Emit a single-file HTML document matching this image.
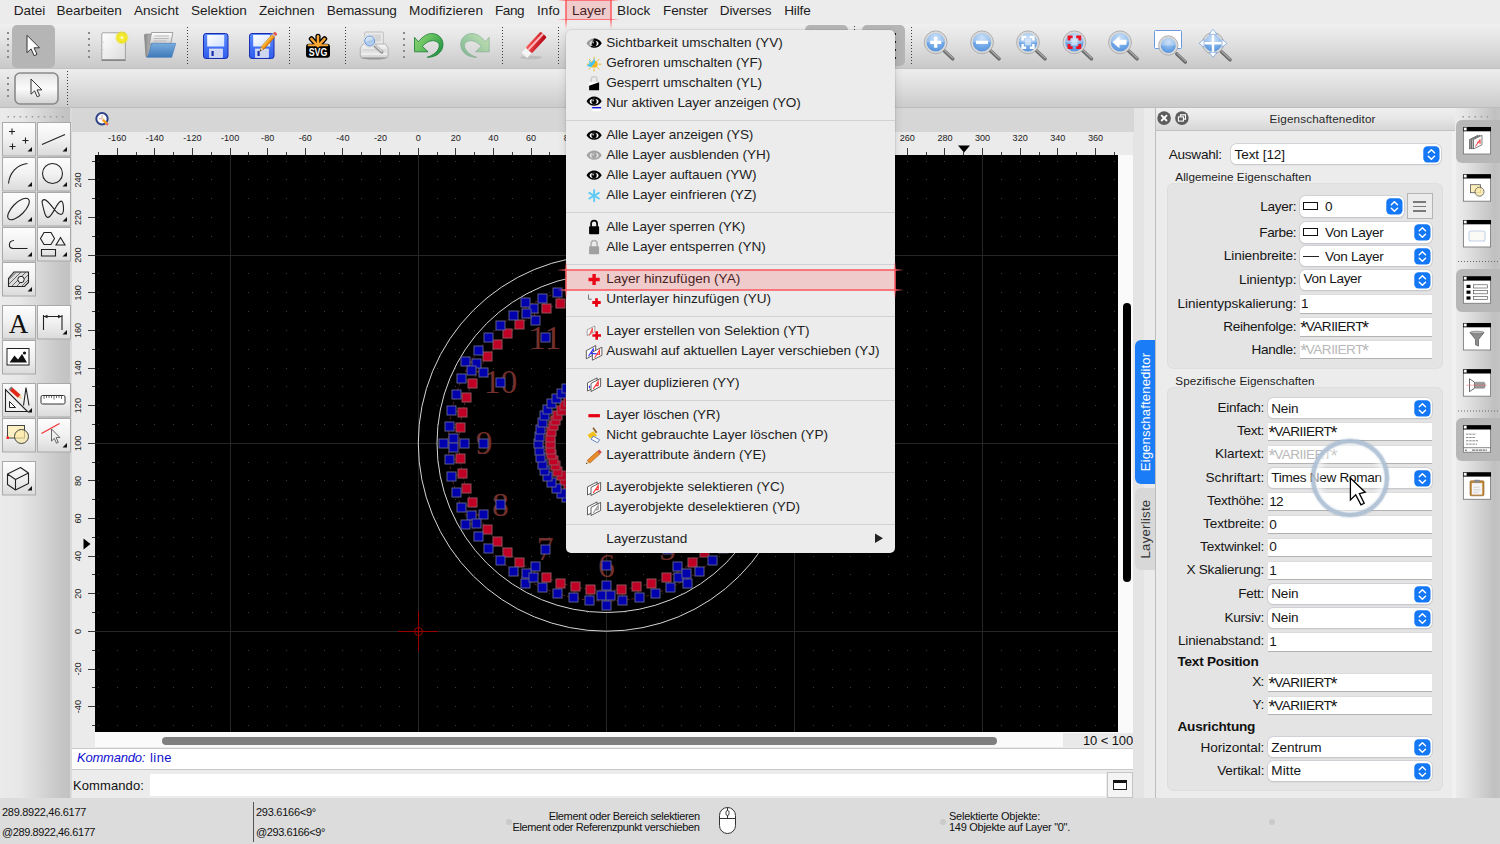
<!DOCTYPE html>
<html lang="de"><head><meta charset="utf-8"><title>QCAD</title>
<style>
html,body{margin:0;padding:0;}
body{width:1500px;height:844px;overflow:hidden;background:#ececec;position:relative;font-family:"Liberation Sans",sans-serif;}
.a{position:absolute;}
.t{position:absolute;white-space:pre;}
svg{position:absolute;overflow:visible;}

</style></head>
<body>
<!-- p10_base.py -->
<div class="a" style="left:0;top:0;width:1500px;height:24px;background:#ececec"></div>
<div class="a" style="left:0;top:24px;width:1500px;height:44px;background:linear-gradient(#efefef,#e6e6e6 30%,#c9c9c9)"></div>
<div class="a" style="left:0;top:68px;width:1500px;height:1px;background:#c2c2c2"></div>
<div class="a" style="left:0;top:69px;width:1500px;height:38px;background:linear-gradient(#ededed,#e4e4e4 30%,#cbcbcb)"></div>
<div class="a" style="left:0;top:107px;width:1500px;height:1px;background:#bdbdbd"></div>
<div class="a" style="left:0;top:108px;width:72px;height:690px;background:linear-gradient(90deg,#ebebeb,#e7e7e7 28%,#c5c5c5 86%,#c2c2c2 97.500%,#dcdcdc 98%)"></div>
<div class="a" style="left:72px;top:108px;width:1062px;height:24px;background:#d6d6d6"></div>
<div class="a" style="left:72px;top:132px;width:1062px;height:616px;background:#ebebeb"></div>
<div class="a" style="left:95px;top:155px;width:1023px;height:577px;background:#000"></div>
<div class="a" style="left:1118px;top:155px;width:15px;height:577px;background:#fafafa"></div>
<div class="a" style="left:1123.200px;top:303px;width:7.600px;height:278.500px;background:#000;border-radius:4px"></div>
<div class="a" style="left:95px;top:732px;width:1038px;height:16px;background:#fafafa"></div>
<div class="a" style="left:162px;top:737px;width:835px;height:8px;background:#7f7f7f;border-radius:4px"></div>
<div class="a" style="left:1063px;top:733px;width:70px;height:14px;background:#e9e9e9"></div>
<span class="t" style="left:1083.0px;top:733px;font:normal 400 13px/16px 'Liberation Sans',sans-serif;color:#111;letter-spacing:-0.12px;">10 &lt; 100</span>
<div class="a" style="left:1133px;top:108px;width:22px;height:690px;background:#e6e6e6"></div>
<div class="a" style="left:72px;top:747px;width:1061px;height:51px;background:#ececec"></div>
<div class="a" style="left:72px;top:748px;width:1061px;height:22px;background:#fff;border-top:1px solid #c8c8c8;border-bottom:1px solid #c8c8c8;box-sizing:border-box"></div>
<span class="t" style="left:77.0px;top:750px;font:italic 400 13px/16px 'Liberation Sans',sans-serif;color:#1010d0;letter-spacing:-0.23px;">Kommando:</span>
<span class="t" style="left:150.0px;top:750px;font:normal 400 13px/16px 'Liberation Sans',sans-serif;color:#1010d0;letter-spacing:0.44px;">line</span>
<span class="t" style="left:73.0px;top:778px;font:normal 400 13px/16px 'Liberation Sans',sans-serif;color:#111;letter-spacing:0.10px;">Kommando:</span>
<div class="a" style="left:150px;top:774px;width:956px;height:22px;background:#fff"></div>
<div class="a" style="left:1107px;top:772px;width:26px;height:26px;background:#f4f4f4;border:1px solid #c4c4c4;box-sizing:border-box"></div>
<div class="a" style="left:1113px;top:780px;width:14px;height:10px;background:#fff;border:1px solid #222;border-top:3px solid #111;box-sizing:border-box"></div>
<div class="a" style="left:0;top:798px;width:1500px;height:46px;background:#dcdcdc"></div>
<span class="t" style="left:2.0px;top:806px;font:normal 400 11px/13px 'Liberation Sans',sans-serif;color:#111;letter-spacing:-0.29px;">289.8922,46.6177</span>
<span class="t" style="left:2.0px;top:826px;font:normal 400 11px/13px 'Liberation Sans',sans-serif;color:#111;letter-spacing:-0.40px;">@289.8922,46.6177</span>
<div class="a" style="left:253px;top:802px;width:1px;height:40px;background:#555"></div>
<span class="t" style="left:256.0px;top:806px;font:normal 400 11px/13px 'Liberation Sans',sans-serif;color:#111;letter-spacing:-0.26px;">293.6166&lt;9°</span>
<span class="t" style="left:256.0px;top:826px;font:normal 400 11px/13px 'Liberation Sans',sans-serif;color:#111;letter-spacing:-0.42px;">@293.6166&lt;9°</span>
<span class="t" style="left:548.7px;top:810px;font:normal 400 11px/13px 'Liberation Sans',sans-serif;color:#111;letter-spacing:-0.34px;">Element oder Bereich selektieren</span>
<span class="t" style="left:512.6px;top:821px;font:normal 400 11px/13px 'Liberation Sans',sans-serif;color:#111;letter-spacing:-0.41px;">Element oder Referenzpunkt verschieben</span>
<span class="t" style="left:949.0px;top:810px;font:normal 400 11px/13px 'Liberation Sans',sans-serif;color:#111;letter-spacing:-0.25px;">Selektierte Objekte:</span>
<span class="t" style="left:949.0px;top:821px;font:normal 400 11px/13px 'Liberation Sans',sans-serif;color:#111;letter-spacing:-0.28px;">149 Objekte auf Layer "0".</span>
<div class="a" style="left:506px;top:818.800px;width:6px;height:6px;border-radius:3px;background:#cacaca"></div>
<div class="a" style="left:940px;top:818.800px;width:6px;height:6px;border-radius:3px;background:#cacaca"></div>
<div class="a" style="left:1269px;top:818.800px;width:6px;height:6px;border-radius:3px;background:#cacaca"></div>
<svg style="left:718px;top:805px" width="20" height="32" viewBox="0 0 20 32"><rect x="1.5" y="2.5" width="16" height="26" rx="8" fill="#fff" stroke="#333" stroke-width="1"/><path d="M1.5 13.5h16M9.5 2.5v4M9.5 10v3.5" stroke="#333" stroke-width="1" fill="none"/><rect x="8" y="5.5" width="3" height="5" rx="1.5" fill="#fff" stroke="#333" stroke-width="0.9"/></svg>
<!-- p20_toolbar.py -->
<span class="t" style="left:13.8px;top:3px;font:normal 400 13.6px/16px 'Liberation Sans',sans-serif;color:#1e1e1e;letter-spacing:-0.07px;">Datei</span>
<span class="t" style="left:56.6px;top:3px;font:normal 400 13.6px/16px 'Liberation Sans',sans-serif;color:#1e1e1e;letter-spacing:-0.07px;">Bearbeiten</span>
<span class="t" style="left:133.9px;top:3px;font:normal 400 13.6px/16px 'Liberation Sans',sans-serif;color:#1e1e1e;letter-spacing:0.05px;">Ansicht</span>
<span class="t" style="left:191.0px;top:3px;font:normal 400 13.6px/16px 'Liberation Sans',sans-serif;color:#1e1e1e;letter-spacing:-0.01px;">Selektion</span>
<span class="t" style="left:259.1px;top:3px;font:normal 400 13.6px/16px 'Liberation Sans',sans-serif;color:#1e1e1e;letter-spacing:-0.05px;">Zeichnen</span>
<span class="t" style="left:326.8px;top:3px;font:normal 400 13.6px/16px 'Liberation Sans',sans-serif;color:#1e1e1e;letter-spacing:-0.21px;">Bemassung</span>
<span class="t" style="left:409.0px;top:3px;font:normal 400 13.6px/16px 'Liberation Sans',sans-serif;color:#1e1e1e;letter-spacing:0.06px;">Modifizieren</span>
<span class="t" style="left:495.0px;top:3px;font:normal 400 13.6px/16px 'Liberation Sans',sans-serif;color:#1e1e1e;letter-spacing:-0.45px;">Fang</span>
<span class="t" style="left:537.0px;top:3px;font:normal 400 13.6px/16px 'Liberation Sans',sans-serif;color:#1e1e1e;letter-spacing:0.08px;">Info</span>
<span class="t" style="left:572.0px;top:3px;font:normal 400 13.6px/16px 'Liberation Sans',sans-serif;color:#1e1e1e;letter-spacing:-0.06px;">Layer</span>
<span class="t" style="left:617.1px;top:3px;font:normal 400 13.6px/16px 'Liberation Sans',sans-serif;color:#1e1e1e;letter-spacing:0.01px;">Block</span>
<span class="t" style="left:663.0px;top:3px;font:normal 400 13.6px/16px 'Liberation Sans',sans-serif;color:#1e1e1e;letter-spacing:-0.17px;">Fenster</span>
<span class="t" style="left:719.8px;top:3px;font:normal 400 13.6px/16px 'Liberation Sans',sans-serif;color:#1e1e1e;letter-spacing:-0.16px;">Diverses</span>
<span class="t" style="left:784.2px;top:3px;font:normal 400 13.6px/16px 'Liberation Sans',sans-serif;color:#1e1e1e;letter-spacing:-0.16px;">Hilfe</span>
<div class="a" style="left:12px;top:25px;width:43px;height:43px;border-radius:5px;background:#b5b5b5"></div>
<div class="a" style="left:7px;top:32px;width:2px;height:2px;background:#8a8a8a"></div><div class="a" style="left:7px;top:38px;width:2px;height:2px;background:#8a8a8a"></div><div class="a" style="left:7px;top:44px;width:2px;height:2px;background:#8a8a8a"></div><div class="a" style="left:7px;top:50px;width:2px;height:2px;background:#8a8a8a"></div><div class="a" style="left:7px;top:56px;width:2px;height:2px;background:#8a8a8a"></div>
<div class="a" style="left:88px;top:32px;width:2px;height:2px;background:#8a8a8a"></div><div class="a" style="left:88px;top:38px;width:2px;height:2px;background:#8a8a8a"></div><div class="a" style="left:88px;top:44px;width:2px;height:2px;background:#8a8a8a"></div><div class="a" style="left:88px;top:50px;width:2px;height:2px;background:#8a8a8a"></div><div class="a" style="left:88px;top:56px;width:2px;height:2px;background:#8a8a8a"></div>
<svg style="left:0;top:0" width="1500" height="110" viewBox="0 0 1500 110">
<path d="M27.0 35.3 L27.0 52.7 L31.1 48.9 L34.1 55.7 L37.0 54.4 L34.0 47.8 L39.5 47.8Z" fill="#fff" stroke="#333" stroke-width="1" stroke-linejoin="round"/>
<rect x="15" y="73" width="43" height="31" rx="5" fill="url(#gb2)" stroke="#8a8a8a" stroke-width="1.6"/>
<path d="M31.0 79.0 L31.0 94.2 L34.6 90.9 L37.2 96.8 L39.7 95.7 L37.1 89.9 L41.9 89.9Z" fill="#f6f6f6" stroke="#333" stroke-width="1" stroke-linejoin="round"/>
<defs><linearGradient id="gpaper" x1="0" y1="0" x2="1" y2="1"><stop offset="0" stop-color="#fff"/><stop offset="1" stop-color="#dcdcdc"/></linearGradient><radialGradient id="gyel"><stop offset="0" stop-color="#fff"/><stop offset="0.300" stop-color="#f4ec30"/><stop offset="0.700" stop-color="#efe520" stop-opacity="0.950"/><stop offset="1" stop-color="#e8dc20" stop-opacity="0"/></radialGradient><linearGradient id="gfold" x1="0" y1="0" x2="0" y2="1"><stop offset="0" stop-color="#7aaedf"/><stop offset="1" stop-color="#3f79b8"/></linearGradient><linearGradient id="gdisk" x1="0" y1="0" x2="0" y2="1"><stop offset="0" stop-color="#5c8cff"/><stop offset="1" stop-color="#2f5cec"/></linearGradient><linearGradient id="glabel" x1="0" y1="0" x2="1" y2="1"><stop offset="0" stop-color="#fff"/><stop offset="1" stop-color="#cfe0ff"/></linearGradient><radialGradient id="glens" cx="0.5" cy="0.3" r="0.8"><stop offset="0" stop-color="#b9d6f6"/><stop offset="0.55" stop-color="#6ea6e6"/><stop offset="1" stop-color="#4a86d2"/></radialGradient><linearGradient id="ggreen" x1="0" y1="0" x2="1" y2="0.600"><stop offset="0" stop-color="#93d873"/><stop offset="0.500" stop-color="#62bf5e"/><stop offset="1" stop-color="#2a9a45"/></linearGradient><linearGradient id="ggreen2" x1="0" y1="0" x2="1" y2="0.600"><stop offset="0" stop-color="#a3e083"/><stop offset="1" stop-color="#3aa055"/></linearGradient><linearGradient id="gred" x1="0" y1="0" x2="1" y2="1"><stop offset="0" stop-color="#ff5a5a"/><stop offset="1" stop-color="#b00010"/></linearGradient><linearGradient id="gfback" x1="0" y1="0" x2="1" y2="0"><stop offset="0" stop-color="#8c8c8c"/><stop offset="1" stop-color="#c4c4c4"/></linearGradient><linearGradient id="gpaper2" x1="0" y1="0" x2="0" y2="1"><stop offset="0" stop-color="#fff"/><stop offset="1" stop-color="#cfcfcf"/></linearGradient><linearGradient id="gpen" x1="0" y1="0" x2="0" y2="1"><stop offset="0" stop-color="#ffd24a"/><stop offset="0.500" stop-color="#f7a11e"/><stop offset="1" stop-color="#e07a10"/></linearGradient><linearGradient id="gprn" x1="0" y1="0" x2="0" y2="1"><stop offset="0" stop-color="#f6f6f6"/><stop offset="1" stop-color="#d4d4d4"/></linearGradient><linearGradient id="glens2" x1="0" y1="0" x2="0.400" y2="1"><stop offset="0" stop-color="#e4eefa"/><stop offset="0.550" stop-color="#c6daf0"/><stop offset="0.600" stop-color="#a8c6ea"/><stop offset="1" stop-color="#b8d2ee"/></linearGradient><linearGradient id="gb2" x1="0" y1="0" x2="0" y2="1"><stop offset="0" stop-color="#e4e4e4"/><stop offset="0.5" stop-color="#fbfbfb"/><stop offset="1" stop-color="#d2d2d2"/></linearGradient></defs>
<rect x="101.800" y="32.800" width="23.600" height="27" rx="1.200" fill="url(#gpaper)" stroke="#9c9c9c" stroke-width="0.900"/><path d="M101.500 60.200h24.200" stroke="#7c7c7c" stroke-width="1.300"/><path d="M103 42.300h1.200M103 49.600h1.200" stroke="#c8c8c8" stroke-width="0.800"/>
<circle cx="121.900" cy="37.700" r="7" fill="url(#gyel)"/>
<path d="M144.500 34.800l1-0.600h6l1.500 2v20.300h-7z" fill="url(#gfback)" stroke="#6e6e6e" stroke-width="0.600"/>
<path d="M151.600 32.500h21.200l-2 11.500h-21.500z" fill="url(#gpaper2)" stroke="#8e8e8e" stroke-width="0.800"/><path d="M154.500 36h14.500M154 38.500h14.500M153.500 41h13" stroke="#b8b8b8" stroke-width="1.100"/>
<path d="M151.700 43.200l24 0.200-4 13.900-25 0 2-3z" fill="url(#gfold)" stroke="#4a7fc0" stroke-width="0.700" stroke-linejoin="round"/>
<rect x="203.5" y="33.5" width="24.5" height="25" rx="2.5" fill="url(#gdisk)" stroke="#1b2fae" stroke-width="1"/><rect x="207.2" y="35" width="17" height="11.5" fill="url(#glabel)"/><rect x="209.5" y="49" width="13" height="8.5" fill="#cdd6ee" stroke="#eef" stroke-width="0.6"/><rect x="211.5" y="51" width="2.2" height="5" fill="#1b2fae"/>
<rect x="249.5" y="33.5" width="24.5" height="25" rx="2.5" fill="url(#gdisk)" stroke="#1b2fae" stroke-width="1"/><rect x="253.2" y="35" width="17" height="11.5" fill="url(#glabel)"/><rect x="255.5" y="49" width="13" height="8.5" fill="#cdd6ee" stroke="#eef" stroke-width="0.6"/><rect x="257.5" y="51" width="2.2" height="5" fill="#1b2fae"/>
<g transform="translate(259.800 51.200) rotate(-48.500)"><path d="M0 0L4.200 -1.900V1.900z" fill="#f0d2a0" stroke="#a8752a" stroke-width="0.400"/><path d="M0 0l1.700-0.800v1.600z" fill="#222"/><rect x="4.200" y="-1.900" width="16.500" height="3.800" fill="url(#gpen)" stroke="#b8600a" stroke-width="0.500"/><rect x="20.700" y="-1.900" width="1.300" height="3.800" fill="#c9c9c9"/><rect x="22" y="-1.900" width="2.500" height="3.800" rx="0.800" fill="#e0574f"/></g>
<path d="M318 46L318 36.3" stroke="#000" stroke-width="5.200" stroke-linecap="round"/>
<path d="M318 46L311.4 38.8" stroke="#000" stroke-width="5.200" stroke-linecap="round"/>
<path d="M318 46L324.6 38.8" stroke="#000" stroke-width="5.200" stroke-linecap="round"/>
<rect x="306" y="43.800" width="24" height="14" rx="3" fill="#000"/>
<path d="M318 46L318 36.3" stroke="#fba834" stroke-width="2.500" stroke-linecap="round"/>
<path d="M318 46L311.4 38.8" stroke="#fba834" stroke-width="2.500" stroke-linecap="round"/>
<path d="M318 46L324.6 38.8" stroke="#fba834" stroke-width="2.500" stroke-linecap="round"/>
<rect x="307.600" y="44.300" width="20.800" height="2" rx="1" fill="#fba834"/>
<text x="318" y="56.400" font-family="Liberation Sans, sans-serif" font-weight="700" font-size="11.600" fill="#fff" text-anchor="middle" textLength="18.600" lengthAdjust="spacingAndGlyphs">SVG</text>
<ellipse cx="374" cy="57.800" rx="13" ry="1.800" fill="#868686" opacity="0.800"/>
<rect x="364.700" y="32" width="18.600" height="14" rx="1" fill="#eaeaea" stroke="#b4b4b4" stroke-width="0.800"/><rect x="372" y="34.500" width="9" height="7" fill="#d6d6d6"/>
<path d="M363 44h22.500l2.500 4v7.700q0 2-2 2h-23.700q-2 0-2-2v-7.700z" fill="url(#gprn)" stroke="#a6a6a6" stroke-width="0.800"/><path d="M362.500 50h23.500" stroke="#c9c9c9" stroke-width="1"/><path d="M361 54h26.500" stroke="#fff" stroke-width="1.200" opacity="0.800"/>
<path d="M374.800 45.800l7 6.300" stroke="#9a9a9a" stroke-width="3.400" stroke-linecap="round"/><path d="M375.200 45.300l6.600 5.900" stroke="#e0e0e0" stroke-width="1.200" stroke-linecap="round"/>
<circle cx="369.700" cy="41" r="6.300" fill="#f2f2f2" stroke="#cfcfcf" stroke-width="0.600"/><circle cx="369.700" cy="41" r="5" fill="url(#glens2)" stroke="#5a8fd2" stroke-width="0.900"/>
<path d="M414.5 37.3L418.3 41.8C421 38.500 426 33.500 431.600 33.500C438 33.500 443 38 443 44.500C443 52 436 57.500 427.200 57.300C433 55.500 439.200 51 439.200 45.600C439.200 42.500 436 40.700 432.500 40.700C428.500 40.700 425 43.500 422.400 46.400L428.100 51.800L414.500 51.800Z" fill="url(#ggreen)" stroke="#1a7a35" stroke-width="0.800" stroke-linejoin="round"/>
<g transform="translate(903.700 0) scale(-1 1)" opacity="0.500"><path d="M414.5 37.3L418.3 41.8C421 38.500 426 33.500 431.600 33.500C438 33.500 443 38 443 44.500C443 52 436 57.500 427.200 57.300C433 55.500 439.200 51 439.200 45.600C439.200 42.500 436 40.700 432.500 40.700C428.500 40.700 425 43.500 422.400 46.400L428.100 51.800L414.500 51.800Z" fill="url(#ggreen2)" stroke="#3a8a55" stroke-width="0.800" stroke-linejoin="round"/></g>
<ellipse cx="531" cy="57.500" rx="11" ry="1.800" fill="#bdbdbd"/>
<g transform="translate(524 55.500) rotate(-47)"><rect x="0" y="-4.200" width="7" height="8.400" fill="#f5f5f5" stroke="#c9c9c9" stroke-width="0.6"/><rect x="7" y="-4.200" width="22" height="8.400" rx="1.500" fill="url(#gred)"/><rect x="7" y="-1.800" width="22" height="2" fill="#ffd0d0" opacity="0.85"/></g>
<path d="M944.2 50.8l8.500 8" stroke="#6b6b6b" stroke-width="3.600" stroke-linecap="round"/><path d="M944.5 50.2l8.500 8" stroke="#a9a9a9" stroke-width="1.200" stroke-linecap="round"/><circle cx="935.7" cy="42.3" r="10.3" fill="url(#glens)" stroke="#d9d9d9" stroke-width="2.200"/><circle cx="935.7" cy="42.3" r="11.4" fill="none" stroke="#9b9b9b" stroke-width="0.700"/><path d="M926.4 42.3a9.3 9.3 0 0 1 18.6 0z" fill="#fff" opacity="0.28"/>
<path d="M930.2 42.3h11M935.7 36.8v11" stroke="#fff" stroke-width="3.200"/>
<path d="M990.5 50.8l8.500 8" stroke="#6b6b6b" stroke-width="3.600" stroke-linecap="round"/><path d="M990.8 50.2l8.500 8" stroke="#a9a9a9" stroke-width="1.200" stroke-linecap="round"/><circle cx="982" cy="42.3" r="10.3" fill="url(#glens)" stroke="#d9d9d9" stroke-width="2.200"/><circle cx="982" cy="42.3" r="11.4" fill="none" stroke="#9b9b9b" stroke-width="0.700"/><path d="M972.7 42.3a9.3 9.3 0 0 1 18.6 0z" fill="#fff" opacity="0.28"/>
<path d="M976 42.3h12" stroke="#fff" stroke-width="3.200"/>
<path d="M1036.5 50.8l8.500 8" stroke="#6b6b6b" stroke-width="3.600" stroke-linecap="round"/><path d="M1036.8 50.2l8.500 8" stroke="#a9a9a9" stroke-width="1.200" stroke-linecap="round"/><circle cx="1028" cy="42.3" r="10.3" fill="url(#glens)" stroke="#d9d9d9" stroke-width="2.200"/><circle cx="1028" cy="42.3" r="11.4" fill="none" stroke="#9b9b9b" stroke-width="0.700"/><path d="M1018.7 42.3a9.3 9.3 0 0 1 18.6 0z" fill="#fff" opacity="0.28"/>
<path d="M1022.6 40.5v-3.6h3.6M1022.6 44.1v3.6h3.6M1033.4 40.5v-3.6h-3.6M1033.4 44.1v3.6h-3.6" fill="none" stroke="#fff" stroke-width="2.4"/>
<rect x="1025" y="39.3" width="6" height="6" fill="#dbe9fa" opacity="0.7"/>
<path d="M1082.9 50.8l8.500 8" stroke="#6b6b6b" stroke-width="3.600" stroke-linecap="round"/><path d="M1083.2 50.2l8.500 8" stroke="#a9a9a9" stroke-width="1.200" stroke-linecap="round"/><circle cx="1074.4" cy="42.3" r="10.3" fill="url(#glens)" stroke="#d9d9d9" stroke-width="2.200"/><circle cx="1074.4" cy="42.3" r="11.4" fill="none" stroke="#9b9b9b" stroke-width="0.700"/><path d="M1065.1 42.3a9.3 9.3 0 0 1 18.6 0z" fill="#fff" opacity="0.28"/>
<path d="M1069 40.5v-3.6h3.6M1069 44.1v3.6h3.6M1079.8 40.5v-3.6h-3.6M1079.8 44.1v3.6h-3.6" fill="none" stroke="#ee1020" stroke-width="2.8"/>
<rect x="1071.4" y="39.3" width="6" height="6" fill="#dbe9fa" opacity="0.7"/>
<path d="M1128.5 50.8l8.500 8" stroke="#6b6b6b" stroke-width="3.600" stroke-linecap="round"/><path d="M1128.8 50.2l8.500 8" stroke="#a9a9a9" stroke-width="1.200" stroke-linecap="round"/><circle cx="1120" cy="42.3" r="10.3" fill="url(#glens)" stroke="#d9d9d9" stroke-width="2.200"/><circle cx="1120" cy="42.3" r="11.4" fill="none" stroke="#9b9b9b" stroke-width="0.700"/><path d="M1110.7 42.3a9.3 9.3 0 0 1 18.6 0z" fill="#fff" opacity="0.28"/>
<path d="M1112.5 42.3l7-6v3.500h7v5h-7v3.500z" fill="#fff"/>
<rect x="1154.500" y="30.500" width="27" height="18" rx="1" fill="#fff" stroke="#6a9ae0" stroke-width="1"/>
<path d="M1176.8 54l8.500 8" stroke="#6b6b6b" stroke-width="3.600" stroke-linecap="round"/><path d="M1177.1 53.4l8.500 8" stroke="#a9a9a9" stroke-width="1.200" stroke-linecap="round"/><circle cx="1168.3" cy="45.5" r="8.6" fill="url(#glens)" stroke="#d9d9d9" stroke-width="2.200"/><circle cx="1168.3" cy="45.5" r="9.7" fill="none" stroke="#9b9b9b" stroke-width="0.700"/><path d="M1160.7 45.5a7.6 7.6 0 0 1 15.2 0z" fill="#fff" opacity="0.28"/>
<path d="M1221.5 51.8l8.500 8" stroke="#6b6b6b" stroke-width="3.600" stroke-linecap="round"/><path d="M1221.8 51.2l8.500 8" stroke="#a9a9a9" stroke-width="1.200" stroke-linecap="round"/><circle cx="1213" cy="43.3" r="9.6" fill="url(#glens)" stroke="#d9d9d9" stroke-width="2.200"/><circle cx="1213" cy="43.3" r="10.7" fill="none" stroke="#9b9b9b" stroke-width="0.700"/><path d="M1204.4 43.3a8.6 8.6 0 0 1 17.2 0z" fill="#fff" opacity="0.28"/>
<path d="M1213 30.8v25M1200.5 43.3h25" stroke="#fff" stroke-width="2.400"/>
<path d="M1213 29.3l4 5h-8zM1213 57.3l4-5h-8zM1199 43.3l5-4v8zM1227 43.3l-5-4v8z" fill="#fff" stroke="#5b8fd6" stroke-width="0.600"/>
</svg>
<div class="a" style="left:186.9px;top:27px;width:1.200px;height:39px;background:repeating-linear-gradient(180deg,#3c3c3c 0,#3c3c3c 1.100px,transparent 1.100px,transparent 3px)"></div>
<div class="a" style="left:288.9px;top:27px;width:1.200px;height:39px;background:repeating-linear-gradient(180deg,#3c3c3c 0,#3c3c3c 1.100px,transparent 1.100px,transparent 3px)"></div>
<div class="a" style="left:344.9px;top:27px;width:1.200px;height:39px;background:repeating-linear-gradient(180deg,#3c3c3c 0,#3c3c3c 1.100px,transparent 1.100px,transparent 3px)"></div>
<div class="a" style="left:501.9px;top:27px;width:1.200px;height:39px;background:repeating-linear-gradient(180deg,#3c3c3c 0,#3c3c3c 1.100px,transparent 1.100px,transparent 3px)"></div>
<div class="a" style="left:558.2px;top:27px;width:1.200px;height:39px;background:repeating-linear-gradient(180deg,#3c3c3c 0,#3c3c3c 1.100px,transparent 1.100px,transparent 3px)"></div>
<div class="a" style="left:910.9px;top:27px;width:1.200px;height:39px;background:repeating-linear-gradient(180deg,#3c3c3c 0,#3c3c3c 1.100px,transparent 1.100px,transparent 3px)"></div>
<div class="a" style="left:66.9px;top:71px;width:1.200px;height:34px;background:repeating-linear-gradient(180deg,#3c3c3c 0,#3c3c3c 1.100px,transparent 1.100px,transparent 3px)"></div>
<div class="a" style="left:403px;top:32px;width:2px;height:2px;background:#8a8a8a"></div><div class="a" style="left:403px;top:38px;width:2px;height:2px;background:#8a8a8a"></div><div class="a" style="left:403px;top:44px;width:2px;height:2px;background:#8a8a8a"></div><div class="a" style="left:403px;top:50px;width:2px;height:2px;background:#8a8a8a"></div><div class="a" style="left:403px;top:56px;width:2px;height:2px;background:#8a8a8a"></div>
<div class="a" style="left:7px;top:77px;width:2px;height:2px;background:#8a8a8a"></div><div class="a" style="left:7px;top:83px;width:2px;height:2px;background:#8a8a8a"></div><div class="a" style="left:7px;top:89px;width:2px;height:2px;background:#8a8a8a"></div><div class="a" style="left:7px;top:95px;width:2px;height:2px;background:#8a8a8a"></div>
<div class="a" style="left:805px;top:25px;width:43px;height:41px;border-radius:5px;background:#b5b5b5"></div>
<div class="a" style="left:862px;top:25px;width:43px;height:41px;border-radius:5px;background:#b5b5b5"></div>
<div class="a" style="left:894.4px;top:33px;width:2px;height:2px;background:#222"></div><div class="a" style="left:894.4px;top:41px;width:2px;height:2px;background:#222"></div><div class="a" style="left:894.4px;top:49px;width:2px;height:2px;background:#222"></div><div class="a" style="left:894.4px;top:57px;width:2px;height:2px;background:#222"></div>
<div class="a" style="left:853.9px;top:26px;width:1.200px;height:40px;background:repeating-linear-gradient(180deg,#3c3c3c 0,#3c3c3c 1.100px,transparent 1.100px,transparent 3px)"></div>
<!-- p30_left.py -->
<svg style="left:0;top:108px" width="72" height="400" viewBox="0 108 72 400">
<defs><linearGradient id="gbtn" x1="0" y1="0" x2="0" y2="1"><stop offset="0" stop-color="#fdfdfd"/><stop offset="0.5" stop-color="#f1f1f1"/><stop offset="1" stop-color="#dadada"/></linearGradient></defs>
<rect x="7.5" y="116" width="1.500" height="1.500" fill="#999"/>
<rect x="13.55" y="116" width="1.500" height="1.500" fill="#999"/>
<rect x="19.6" y="116" width="1.500" height="1.500" fill="#999"/>
<rect x="25.65" y="116" width="1.500" height="1.500" fill="#999"/>
<rect x="31.7" y="116" width="1.500" height="1.500" fill="#999"/>
<rect x="37.75" y="116" width="1.500" height="1.500" fill="#999"/>
<rect x="43.8" y="116" width="1.500" height="1.500" fill="#999"/>
<rect x="49.85" y="116" width="1.500" height="1.500" fill="#999"/>
<rect x="55.9" y="116" width="1.500" height="1.500" fill="#999"/>
<rect x="61.95" y="116" width="1.500" height="1.500" fill="#999"/>
<rect x="2.5" y="122.5" width="33" height="33.500" fill="url(#gbtn)" stroke="#a9a9a9" stroke-width="1"/><path d="M32 151.5v-4.500l-4.500 4.500z" fill="#111"/>
<path d="M9 131.500h6M12 128.500v6M22.500 140.500h6M25.500 137.500v6M9.500 146.500h6M12.500 143.500v6" fill="none" stroke="#222" stroke-width="1.100"/>
<rect x="37.5" y="122.5" width="33" height="33.500" fill="url(#gbtn)" stroke="#a9a9a9" stroke-width="1"/><path d="M67 151.5v-4.500l-4.500 4.500z" fill="#111"/>
<path d="M42 144.500L65 134.500" fill="none" stroke="#222" stroke-width="1.100"/>
<rect x="2.5" y="157.5" width="33" height="33.500" fill="url(#gbtn)" stroke="#a9a9a9" stroke-width="1"/><path d="M32 186.5v-4.500l-4.500 4.500z" fill="#111"/>
<path d="M8.500 183.500C9.500 173 17 164.500 27.500 163.500" fill="none" stroke="#222" stroke-width="1.100"/>
<rect x="37.5" y="157.5" width="33" height="33.500" fill="url(#gbtn)" stroke="#a9a9a9" stroke-width="1"/><path d="M67 186.5v-4.500l-4.500 4.500z" fill="#111"/>
<circle cx="52.500" cy="173.500" r="10" fill="none" stroke="#222" stroke-width="1.100"/>
<rect x="2.5" y="192.5" width="33" height="33.500" fill="url(#gbtn)" stroke="#a9a9a9" stroke-width="1"/><path d="M32 221.5v-4.500l-4.500 4.500z" fill="#111"/>
<ellipse cx="18.500" cy="209" rx="14" ry="6" transform="rotate(-45 18.500 209)" fill="none" stroke="#222" stroke-width="1.100"/>
<rect x="37.5" y="192.5" width="33" height="33.500" fill="url(#gbtn)" stroke="#a9a9a9" stroke-width="1"/><path d="M67 221.5v-4.500l-4.500 4.500z" fill="#111"/>
<path d="M42 201.500C44 196 50 204 54 209C58 214.500 64 218 63.500 208C63 198 60 200 56 207C52 214 48 222 45 214C43.500 209 42.500 205 42 201.500z" fill="none" stroke="#222" stroke-width="1.100"/>
<rect x="2.5" y="227.5" width="33" height="33.500" fill="url(#gbtn)" stroke="#a9a9a9" stroke-width="1"/><path d="M32 256.5v-4.500l-4.500 4.500z" fill="#111"/>
<path d="M14 240.500C8 241 8 248 13 248.500H27.500" fill="none" stroke="#222" stroke-width="1.100"/>
<rect x="37.5" y="227.5" width="33" height="33.500" fill="url(#gbtn)" stroke="#a9a9a9" stroke-width="1"/><path d="M67 256.5v-4.500l-4.500 4.500z" fill="#111"/>
<path d="M44 232.500h7l3.500 6-3.500 6h-7l-3.500-6zM60.500 237.500l4.500 7.500h-9zM41.500 249.500h14v6.500h-14z" fill="none" stroke="#222" stroke-width="1.100"/>
<rect x="2.5" y="262.5" width="33" height="33.500" fill="url(#gbtn)" stroke="#a9a9a9" stroke-width="1"/><path d="M32 291.5v-4.500l-4.500 4.500z" fill="#111"/>
<path d="M8.500 286.500v-8l5.500-6.500h14.500v10.500l-4 4z" fill="#ddd" stroke="#222" stroke-width="1.100"/><path d="M9 284l12-12M9 279.500l7-7M12 286l14-14M17 286l11.500-11.500M22 286l6.500-6.500" stroke="#333" stroke-width="0.700"/><circle cx="21" cy="279.500" r="3.200" fill="#eee" stroke="#222" stroke-width="1"/>
<rect x="2.5" y="305.5" width="33" height="33.500" fill="url(#gbtn)" stroke="#a9a9a9" stroke-width="1"/>
<text x="18.500" y="332.500" font-family="Liberation Serif, serif" font-size="27" fill="#111" text-anchor="middle">A</text>
<rect x="37.5" y="305.5" width="33" height="33.500" fill="url(#gbtn)" stroke="#a9a9a9" stroke-width="1"/><path d="M67 334.5v-4.500l-4.500 4.500z" fill="#111"/>
<path d="M43.500 315v15M62 315v15M43.500 316.500h18.500" fill="none" stroke="#222" stroke-width="1.100"/><path d="M43.500 316.500l4-1.800v3.600zM62 316.500l-4-1.800v3.600z" fill="#222"/>
<rect x="2.5" y="340.5" width="33" height="33.500" fill="url(#gbtn)" stroke="#a9a9a9" stroke-width="1"/>
<rect x="7" y="348.500" width="22" height="16.500" fill="#fff" stroke="#222" stroke-width="1"/><path d="M9.500 362.500l5-7 3.500 4 4-5.500 5 8.500z" fill="#111"/><circle cx="24.500" cy="353" r="1.600" fill="#111"/>
<rect x="2.5" y="383.5" width="33" height="33.500" fill="url(#gbtn)" stroke="#a9a9a9" stroke-width="1"/><path d="M32 412.5v-4.500l-4.500 4.500z" fill="#111"/>
<path d="M5.500 389.500v22h22z" fill="#f2f2f2" stroke="#222" stroke-width="1.100"/><path d="M9.500 401.500v6h6z" fill="#fff" stroke="#222" stroke-width="1"/><g transform="translate(11 389) rotate(42)"><rect x="0" y="-2" width="11" height="4" fill="#e02818"/><path d="M11 -2l4 2-4 2z" fill="#f2c98a"/><rect x="-1.500" y="-2" width="2" height="4" fill="#777"/></g><path d="M26 387.500l-2.500 18M26 387.500l3 18M25 391.500h2" stroke="#222" stroke-width="1.100" fill="none"/>
<rect x="37.5" y="383.5" width="33" height="33.500" fill="url(#gbtn)" stroke="#a9a9a9" stroke-width="1"/>
<rect x="41" y="395.500" width="24" height="8.500" rx="1.500" fill="#fff" stroke="#333" stroke-width="1"/><path d="M44 396v3M46.500 396v2M49 396v2M51.500 396v2M54 396v3.500M56.500 396v2M59 396v2M61.500 396v3" stroke="#333" stroke-width="0.700"/>
<rect x="2.5" y="418.5" width="33" height="33.500" fill="url(#gbtn)" stroke="#a9a9a9" stroke-width="1"/>
<rect x="7.500" y="425.500" width="17" height="12.500" fill="#fdf1c4" stroke="#444" stroke-width="1"/><circle cx="21.500" cy="436.500" r="7" fill="#fbe9a6" fill-opacity="0.7" stroke="#444" stroke-width="1"/><rect x="6.500" y="436.500" width="2.500" height="2.500" fill="#f22"/>
<rect x="37.5" y="418.5" width="33" height="33.500" fill="url(#gbtn)" stroke="#a9a9a9" stroke-width="1"/><path d="M67 447.5v-4.500l-4.500 4.500z" fill="#111"/>
<path d="M41.500 433.500L59.500 423.500" stroke="#f03030" stroke-width="1.200"/><path d="M51.500 429v12l2.800-2.600 2.200 4.800 1.800-0.800-2.200-4.700 3.800-0.200z" fill="#eee" stroke="#555" stroke-width="0.900"/>
<rect x="2.5" y="461.5" width="33" height="33.500" fill="url(#gbtn)" stroke="#a9a9a9" stroke-width="1"/><path d="M32 490.5v-4.500l-4.500 4.500z" fill="#111"/>
<path d="M7.500 474l13-6.500 8 5.500v10.500l-13 6.500-8-5.500zM7.500 474l8 5.500 13-6.500M15.500 479.500v10.500" fill="none" stroke="#222" stroke-width="1.100" stroke-linejoin="round"/>
</svg>
<!-- p40_canvas.py -->
<svg style="left:72px;top:132px" width="1062" height="616" viewBox="72 132 1062 616">
<path d="M98.5 152V155M117.5 148V155M136.5 152V155M154.5 148V155M173.5 152V155M192.5 148V155M211.5 152V155M230.5 148V155M248.5 152V155M267.5 148V155M286.5 152V155M305.5 148V155M324.5 152V155M342.5 148V155M361.5 152V155M380.5 148V155M399.5 152V155M418.5 148V155M437.5 152V155M455.5 148V155M474.5 152V155M493.5 148V155M512.5 152V155M531.5 148V155M549.5 152V155M568.5 148V155M587.5 152V155M606.5 148V155M625.5 152V155M643.5 148V155M662.5 152V155M681.5 148V155M700.5 152V155M719.5 148V155M738.5 152V155M756.5 148V155M775.5 152V155M794.5 148V155M813.5 152V155M832.5 148V155M850.5 152V155M869.5 148V155M888.5 152V155M907.5 148V155M926.5 152V155M944.5 148V155M963.5 152V155M982.5 148V155M1001.5 152V155M1020.5 148V155M1039.5 152V155M1057.5 148V155M1076.5 152V155M1095.5 148V155M1114.5 152V155M92 725.5H95M88 706.5H95M92 687.5H95M88 669.5H95M92 650.5H95M88 631.5H95M92 612.5H95M88 593.5H95M92 574.5H95M88 556.5H95M92 537.5H95M88 518.5H95M92 499.5H95M88 480.5H95M92 462.5H95M88 443.5H95M92 424.5H95M88 405.5H95M92 386.5H95M88 368.5H95M92 349.5H95M88 330.5H95M92 311.5H95M88 292.5H95M92 273.5H95M88 255.5H95M92 236.5H95M88 217.5H95M92 198.5H95M88 179.5H95M92 161.5H95" stroke="#3a3a3a" stroke-width="1" fill="none"/>
<path d="M958 145.500h12l-6 7z" fill="#000"/>
<path d="M83.500 538.500v11l7-5.500z" fill="#000"/>
<g font-family="Liberation Sans, sans-serif" font-size="9.100" fill="#1c1c1c" text-anchor="middle">
<text x="117.2" y="140.600">-160</text>
<text x="154.8" y="140.600">-140</text>
<text x="192.4" y="140.600">-120</text>
<text x="230.1" y="140.600">-100</text>
<text x="267.7" y="140.600">-80</text>
<text x="305.3" y="140.600">-60</text>
<text x="342.9" y="140.600">-40</text>
<text x="380.6" y="140.600">-20</text>
<text x="418.2" y="140.600">0</text>
<text x="455.8" y="140.600">20</text>
<text x="493.4" y="140.600">40</text>
<text x="531.1" y="140.600">60</text>
<text x="568.7" y="140.600">80</text>
<text x="606.3" y="140.600">100</text>
<text x="644.0" y="140.600">120</text>
<text x="681.6" y="140.600">140</text>
<text x="719.2" y="140.600">160</text>
<text x="756.8" y="140.600">180</text>
<text x="794.5" y="140.600">200</text>
<text x="832.1" y="140.600">220</text>
<text x="869.7" y="140.600">240</text>
<text x="907.3" y="140.600">260</text>
<text x="945.0" y="140.600">280</text>
<text x="982.6" y="140.600">300</text>
<text x="1020.2" y="140.600">320</text>
<text x="1057.8" y="140.600">340</text>
<text x="1095.5" y="140.600">360</text>
<text transform="translate(80.600 706.6) rotate(-90)">-40</text>
<text transform="translate(80.600 669.0) rotate(-90)">-20</text>
<text transform="translate(80.600 631.4) rotate(-90)">0</text>
<text transform="translate(80.600 593.8) rotate(-90)">20</text>
<text transform="translate(80.600 556.1) rotate(-90)">40</text>
<text transform="translate(80.600 518.5) rotate(-90)">60</text>
<text transform="translate(80.600 480.9) rotate(-90)">80</text>
<text transform="translate(80.600 443.3) rotate(-90)">100</text>
<text transform="translate(80.600 405.6) rotate(-90)">120</text>
<text transform="translate(80.600 368.0) rotate(-90)">140</text>
<text transform="translate(80.600 330.4) rotate(-90)">160</text>
<text transform="translate(80.600 292.8) rotate(-90)">180</text>
<text transform="translate(80.600 255.1) rotate(-90)">200</text>
<text transform="translate(80.600 217.5) rotate(-90)">220</text>
<text transform="translate(80.600 179.9) rotate(-90)">240</text>
</g></svg>
<svg style="left:94px;top:110px" width="18" height="18" viewBox="94 110 18 18"><circle cx="102" cy="118.800" r="5.700" fill="#fff" stroke="#2f4488" stroke-width="2"/><path d="M102 115v3.800h-3" stroke="#c88" stroke-width="0.800" fill="none"/><path d="M102.500 119.300l4.800 4.800" stroke="#f0a020" stroke-width="2.400" stroke-linecap="butt"/><path d="M106.600 123.400l1.400 1.400" stroke="#e66" stroke-width="2.400"/><path d="M101.800 118.600l2.200 0.400-1.800 1.800z" fill="#f6d9a0"/></svg>
<svg style="left:95px;top:155px" width="1023" height="577" viewBox="95 155 1023 577">
<path d="M98 725h1M98 706h1M98 687h1M98 669h1M98 650h1M98 631h1M98 612h1M98 593h1M98 574h1M98 556h1M98 537h1M98 518h1M98 499h1M98 480h1M98 462h1M98 443h1M98 424h1M98 405h1M98 386h1M98 368h1M98 349h1M98 330h1M98 311h1M98 292h1M98 273h1M98 255h1M98 236h1M98 217h1M98 198h1M98 179h1M98 161h1M117 725h1M117 706h1M117 687h1M117 669h1M117 650h1M117 631h1M117 612h1M117 593h1M117 574h1M117 556h1M117 537h1M117 518h1M117 499h1M117 480h1M117 462h1M117 443h1M117 424h1M117 405h1M117 386h1M117 368h1M117 349h1M117 330h1M117 311h1M117 292h1M117 273h1M117 255h1M117 236h1M117 217h1M117 198h1M117 179h1M117 161h1M136 725h1M136 706h1M136 687h1M136 669h1M136 650h1M136 631h1M136 612h1M136 593h1M136 574h1M136 556h1M136 537h1M136 518h1M136 499h1M136 480h1M136 462h1M136 443h1M136 424h1M136 405h1M136 386h1M136 368h1M136 349h1M136 330h1M136 311h1M136 292h1M136 273h1M136 255h1M136 236h1M136 217h1M136 198h1M136 179h1M136 161h1M154 725h1M154 706h1M154 687h1M154 669h1M154 650h1M154 631h1M154 612h1M154 593h1M154 574h1M154 556h1M154 537h1M154 518h1M154 499h1M154 480h1M154 462h1M154 443h1M154 424h1M154 405h1M154 386h1M154 368h1M154 349h1M154 330h1M154 311h1M154 292h1M154 273h1M154 255h1M154 236h1M154 217h1M154 198h1M154 179h1M154 161h1M173 725h1M173 706h1M173 687h1M173 669h1M173 650h1M173 631h1M173 612h1M173 593h1M173 574h1M173 556h1M173 537h1M173 518h1M173 499h1M173 480h1M173 462h1M173 443h1M173 424h1M173 405h1M173 386h1M173 368h1M173 349h1M173 330h1M173 311h1M173 292h1M173 273h1M173 255h1M173 236h1M173 217h1M173 198h1M173 179h1M173 161h1M192 725h1M192 706h1M192 687h1M192 669h1M192 650h1M192 631h1M192 612h1M192 593h1M192 574h1M192 556h1M192 537h1M192 518h1M192 499h1M192 480h1M192 462h1M192 443h1M192 424h1M192 405h1M192 386h1M192 368h1M192 349h1M192 330h1M192 311h1M192 292h1M192 273h1M192 255h1M192 236h1M192 217h1M192 198h1M192 179h1M192 161h1M211 725h1M211 706h1M211 687h1M211 669h1M211 650h1M211 631h1M211 612h1M211 593h1M211 574h1M211 556h1M211 537h1M211 518h1M211 499h1M211 480h1M211 462h1M211 443h1M211 424h1M211 405h1M211 386h1M211 368h1M211 349h1M211 330h1M211 311h1M211 292h1M211 273h1M211 255h1M211 236h1M211 217h1M211 198h1M211 179h1M211 161h1M230 725h1M230 706h1M230 687h1M230 669h1M230 650h1M230 631h1M230 612h1M230 593h1M230 574h1M230 556h1M230 537h1M230 518h1M230 499h1M230 480h1M230 462h1M230 443h1M230 424h1M230 405h1M230 386h1M230 368h1M230 349h1M230 330h1M230 311h1M230 292h1M230 273h1M230 255h1M230 236h1M230 217h1M230 198h1M230 179h1M230 161h1M248 725h1M248 706h1M248 687h1M248 669h1M248 650h1M248 631h1M248 612h1M248 593h1M248 574h1M248 556h1M248 537h1M248 518h1M248 499h1M248 480h1M248 462h1M248 443h1M248 424h1M248 405h1M248 386h1M248 368h1M248 349h1M248 330h1M248 311h1M248 292h1M248 273h1M248 255h1M248 236h1M248 217h1M248 198h1M248 179h1M248 161h1M267 725h1M267 706h1M267 687h1M267 669h1M267 650h1M267 631h1M267 612h1M267 593h1M267 574h1M267 556h1M267 537h1M267 518h1M267 499h1M267 480h1M267 462h1M267 443h1M267 424h1M267 405h1M267 386h1M267 368h1M267 349h1M267 330h1M267 311h1M267 292h1M267 273h1M267 255h1M267 236h1M267 217h1M267 198h1M267 179h1M267 161h1M286 725h1M286 706h1M286 687h1M286 669h1M286 650h1M286 631h1M286 612h1M286 593h1M286 574h1M286 556h1M286 537h1M286 518h1M286 499h1M286 480h1M286 462h1M286 443h1M286 424h1M286 405h1M286 386h1M286 368h1M286 349h1M286 330h1M286 311h1M286 292h1M286 273h1M286 255h1M286 236h1M286 217h1M286 198h1M286 179h1M286 161h1M305 725h1M305 706h1M305 687h1M305 669h1M305 650h1M305 631h1M305 612h1M305 593h1M305 574h1M305 556h1M305 537h1M305 518h1M305 499h1M305 480h1M305 462h1M305 443h1M305 424h1M305 405h1M305 386h1M305 368h1M305 349h1M305 330h1M305 311h1M305 292h1M305 273h1M305 255h1M305 236h1M305 217h1M305 198h1M305 179h1M305 161h1M324 725h1M324 706h1M324 687h1M324 669h1M324 650h1M324 631h1M324 612h1M324 593h1M324 574h1M324 556h1M324 537h1M324 518h1M324 499h1M324 480h1M324 462h1M324 443h1M324 424h1M324 405h1M324 386h1M324 368h1M324 349h1M324 330h1M324 311h1M324 292h1M324 273h1M324 255h1M324 236h1M324 217h1M324 198h1M324 179h1M324 161h1M342 725h1M342 706h1M342 687h1M342 669h1M342 650h1M342 631h1M342 612h1M342 593h1M342 574h1M342 556h1M342 537h1M342 518h1M342 499h1M342 480h1M342 462h1M342 443h1M342 424h1M342 405h1M342 386h1M342 368h1M342 349h1M342 330h1M342 311h1M342 292h1M342 273h1M342 255h1M342 236h1M342 217h1M342 198h1M342 179h1M342 161h1M361 725h1M361 706h1M361 687h1M361 669h1M361 650h1M361 631h1M361 612h1M361 593h1M361 574h1M361 556h1M361 537h1M361 518h1M361 499h1M361 480h1M361 462h1M361 443h1M361 424h1M361 405h1M361 386h1M361 368h1M361 349h1M361 330h1M361 311h1M361 292h1M361 273h1M361 255h1M361 236h1M361 217h1M361 198h1M361 179h1M361 161h1M380 725h1M380 706h1M380 687h1M380 669h1M380 650h1M380 631h1M380 612h1M380 593h1M380 574h1M380 556h1M380 537h1M380 518h1M380 499h1M380 480h1M380 462h1M380 443h1M380 424h1M380 405h1M380 386h1M380 368h1M380 349h1M380 330h1M380 311h1M380 292h1M380 273h1M380 255h1M380 236h1M380 217h1M380 198h1M380 179h1M380 161h1M399 725h1M399 706h1M399 687h1M399 669h1M399 650h1M399 631h1M399 612h1M399 593h1M399 574h1M399 556h1M399 537h1M399 518h1M399 499h1M399 480h1M399 462h1M399 443h1M399 424h1M399 405h1M399 386h1M399 368h1M399 349h1M399 330h1M399 311h1M399 292h1M399 273h1M399 255h1M399 236h1M399 217h1M399 198h1M399 179h1M399 161h1M418 725h1M418 706h1M418 687h1M418 669h1M418 650h1M418 631h1M418 612h1M418 593h1M418 574h1M418 556h1M418 537h1M418 518h1M418 499h1M418 480h1M418 462h1M418 443h1M418 424h1M418 405h1M418 386h1M418 368h1M418 349h1M418 330h1M418 311h1M418 292h1M418 273h1M418 255h1M418 236h1M418 217h1M418 198h1M418 179h1M418 161h1M437 725h1M437 706h1M437 687h1M437 669h1M437 650h1M437 631h1M437 612h1M437 593h1M437 574h1M437 556h1M437 537h1M437 518h1M437 499h1M437 480h1M437 462h1M437 443h1M437 424h1M437 405h1M437 386h1M437 368h1M437 349h1M437 330h1M437 311h1M437 292h1M437 273h1M437 255h1M437 236h1M437 217h1M437 198h1M437 179h1M437 161h1M455 725h1M455 706h1M455 687h1M455 669h1M455 650h1M455 631h1M455 612h1M455 593h1M455 574h1M455 556h1M455 537h1M455 518h1M455 499h1M455 480h1M455 462h1M455 443h1M455 424h1M455 405h1M455 386h1M455 368h1M455 349h1M455 330h1M455 311h1M455 292h1M455 273h1M455 255h1M455 236h1M455 217h1M455 198h1M455 179h1M455 161h1M474 725h1M474 706h1M474 687h1M474 669h1M474 650h1M474 631h1M474 612h1M474 593h1M474 574h1M474 556h1M474 537h1M474 518h1M474 499h1M474 480h1M474 462h1M474 443h1M474 424h1M474 405h1M474 386h1M474 368h1M474 349h1M474 330h1M474 311h1M474 292h1M474 273h1M474 255h1M474 236h1M474 217h1M474 198h1M474 179h1M474 161h1M493 725h1M493 706h1M493 687h1M493 669h1M493 650h1M493 631h1M493 612h1M493 593h1M493 574h1M493 556h1M493 537h1M493 518h1M493 499h1M493 480h1M493 462h1M493 443h1M493 424h1M493 405h1M493 386h1M493 368h1M493 349h1M493 330h1M493 311h1M493 292h1M493 273h1M493 255h1M493 236h1M493 217h1M493 198h1M493 179h1M493 161h1M512 725h1M512 706h1M512 687h1M512 669h1M512 650h1M512 631h1M512 612h1M512 593h1M512 574h1M512 556h1M512 537h1M512 518h1M512 499h1M512 480h1M512 462h1M512 443h1M512 424h1M512 405h1M512 386h1M512 368h1M512 349h1M512 330h1M512 311h1M512 292h1M512 273h1M512 255h1M512 236h1M512 217h1M512 198h1M512 179h1M512 161h1M531 725h1M531 706h1M531 687h1M531 669h1M531 650h1M531 631h1M531 612h1M531 593h1M531 574h1M531 556h1M531 537h1M531 518h1M531 499h1M531 480h1M531 462h1M531 443h1M531 424h1M531 405h1M531 386h1M531 368h1M531 349h1M531 330h1M531 311h1M531 292h1M531 273h1M531 255h1M531 236h1M531 217h1M531 198h1M531 179h1M531 161h1M549 725h1M549 706h1M549 687h1M549 669h1M549 650h1M549 631h1M549 612h1M549 593h1M549 574h1M549 556h1M549 537h1M549 518h1M549 499h1M549 480h1M549 462h1M549 443h1M549 424h1M549 405h1M549 386h1M549 368h1M549 349h1M549 330h1M549 311h1M549 292h1M549 273h1M549 255h1M549 236h1M549 217h1M549 198h1M549 179h1M549 161h1M568 725h1M568 706h1M568 687h1M568 669h1M568 650h1M568 631h1M568 612h1M568 593h1M568 574h1M568 556h1M568 537h1M568 518h1M568 499h1M568 480h1M568 462h1M568 443h1M568 424h1M568 405h1M568 386h1M568 368h1M568 349h1M568 330h1M568 311h1M568 292h1M568 273h1M568 255h1M568 236h1M568 217h1M568 198h1M568 179h1M568 161h1M587 725h1M587 706h1M587 687h1M587 669h1M587 650h1M587 631h1M587 612h1M587 593h1M587 574h1M587 556h1M587 537h1M587 518h1M587 499h1M587 480h1M587 462h1M587 443h1M587 424h1M587 405h1M587 386h1M587 368h1M587 349h1M587 330h1M587 311h1M587 292h1M587 273h1M587 255h1M587 236h1M587 217h1M587 198h1M587 179h1M587 161h1M606 725h1M606 706h1M606 687h1M606 669h1M606 650h1M606 631h1M606 612h1M606 593h1M606 574h1M606 556h1M606 537h1M606 518h1M606 499h1M606 480h1M606 462h1M606 443h1M606 424h1M606 405h1M606 386h1M606 368h1M606 349h1M606 330h1M606 311h1M606 292h1M606 273h1M606 255h1M606 236h1M606 217h1M606 198h1M606 179h1M606 161h1M625 725h1M625 706h1M625 687h1M625 669h1M625 650h1M625 631h1M625 612h1M625 593h1M625 574h1M625 556h1M625 537h1M625 518h1M625 499h1M625 480h1M625 462h1M625 443h1M625 424h1M625 405h1M625 386h1M625 368h1M625 349h1M625 330h1M625 311h1M625 292h1M625 273h1M625 255h1M625 236h1M625 217h1M625 198h1M625 179h1M625 161h1M643 725h1M643 706h1M643 687h1M643 669h1M643 650h1M643 631h1M643 612h1M643 593h1M643 574h1M643 556h1M643 537h1M643 518h1M643 499h1M643 480h1M643 462h1M643 443h1M643 424h1M643 405h1M643 386h1M643 368h1M643 349h1M643 330h1M643 311h1M643 292h1M643 273h1M643 255h1M643 236h1M643 217h1M643 198h1M643 179h1M643 161h1M662 725h1M662 706h1M662 687h1M662 669h1M662 650h1M662 631h1M662 612h1M662 593h1M662 574h1M662 556h1M662 537h1M662 518h1M662 499h1M662 480h1M662 462h1M662 443h1M662 424h1M662 405h1M662 386h1M662 368h1M662 349h1M662 330h1M662 311h1M662 292h1M662 273h1M662 255h1M662 236h1M662 217h1M662 198h1M662 179h1M662 161h1M681 725h1M681 706h1M681 687h1M681 669h1M681 650h1M681 631h1M681 612h1M681 593h1M681 574h1M681 556h1M681 537h1M681 518h1M681 499h1M681 480h1M681 462h1M681 443h1M681 424h1M681 405h1M681 386h1M681 368h1M681 349h1M681 330h1M681 311h1M681 292h1M681 273h1M681 255h1M681 236h1M681 217h1M681 198h1M681 179h1M681 161h1M700 725h1M700 706h1M700 687h1M700 669h1M700 650h1M700 631h1M700 612h1M700 593h1M700 574h1M700 556h1M700 537h1M700 518h1M700 499h1M700 480h1M700 462h1M700 443h1M700 424h1M700 405h1M700 386h1M700 368h1M700 349h1M700 330h1M700 311h1M700 292h1M700 273h1M700 255h1M700 236h1M700 217h1M700 198h1M700 179h1M700 161h1M719 725h1M719 706h1M719 687h1M719 669h1M719 650h1M719 631h1M719 612h1M719 593h1M719 574h1M719 556h1M719 537h1M719 518h1M719 499h1M719 480h1M719 462h1M719 443h1M719 424h1M719 405h1M719 386h1M719 368h1M719 349h1M719 330h1M719 311h1M719 292h1M719 273h1M719 255h1M719 236h1M719 217h1M719 198h1M719 179h1M719 161h1M738 725h1M738 706h1M738 687h1M738 669h1M738 650h1M738 631h1M738 612h1M738 593h1M738 574h1M738 556h1M738 537h1M738 518h1M738 499h1M738 480h1M738 462h1M738 443h1M738 424h1M738 405h1M738 386h1M738 368h1M738 349h1M738 330h1M738 311h1M738 292h1M738 273h1M738 255h1M738 236h1M738 217h1M738 198h1M738 179h1M738 161h1M756 725h1M756 706h1M756 687h1M756 669h1M756 650h1M756 631h1M756 612h1M756 593h1M756 574h1M756 556h1M756 537h1M756 518h1M756 499h1M756 480h1M756 462h1M756 443h1M756 424h1M756 405h1M756 386h1M756 368h1M756 349h1M756 330h1M756 311h1M756 292h1M756 273h1M756 255h1M756 236h1M756 217h1M756 198h1M756 179h1M756 161h1M775 725h1M775 706h1M775 687h1M775 669h1M775 650h1M775 631h1M775 612h1M775 593h1M775 574h1M775 556h1M775 537h1M775 518h1M775 499h1M775 480h1M775 462h1M775 443h1M775 424h1M775 405h1M775 386h1M775 368h1M775 349h1M775 330h1M775 311h1M775 292h1M775 273h1M775 255h1M775 236h1M775 217h1M775 198h1M775 179h1M775 161h1M794 725h1M794 706h1M794 687h1M794 669h1M794 650h1M794 631h1M794 612h1M794 593h1M794 574h1M794 556h1M794 537h1M794 518h1M794 499h1M794 480h1M794 462h1M794 443h1M794 424h1M794 405h1M794 386h1M794 368h1M794 349h1M794 330h1M794 311h1M794 292h1M794 273h1M794 255h1M794 236h1M794 217h1M794 198h1M794 179h1M794 161h1M813 725h1M813 706h1M813 687h1M813 669h1M813 650h1M813 631h1M813 612h1M813 593h1M813 574h1M813 556h1M813 537h1M813 518h1M813 499h1M813 480h1M813 462h1M813 443h1M813 424h1M813 405h1M813 386h1M813 368h1M813 349h1M813 330h1M813 311h1M813 292h1M813 273h1M813 255h1M813 236h1M813 217h1M813 198h1M813 179h1M813 161h1M832 725h1M832 706h1M832 687h1M832 669h1M832 650h1M832 631h1M832 612h1M832 593h1M832 574h1M832 556h1M832 537h1M832 518h1M832 499h1M832 480h1M832 462h1M832 443h1M832 424h1M832 405h1M832 386h1M832 368h1M832 349h1M832 330h1M832 311h1M832 292h1M832 273h1M832 255h1M832 236h1M832 217h1M832 198h1M832 179h1M832 161h1M850 725h1M850 706h1M850 687h1M850 669h1M850 650h1M850 631h1M850 612h1M850 593h1M850 574h1M850 556h1M850 537h1M850 518h1M850 499h1M850 480h1M850 462h1M850 443h1M850 424h1M850 405h1M850 386h1M850 368h1M850 349h1M850 330h1M850 311h1M850 292h1M850 273h1M850 255h1M850 236h1M850 217h1M850 198h1M850 179h1M850 161h1M869 725h1M869 706h1M869 687h1M869 669h1M869 650h1M869 631h1M869 612h1M869 593h1M869 574h1M869 556h1M869 537h1M869 518h1M869 499h1M869 480h1M869 462h1M869 443h1M869 424h1M869 405h1M869 386h1M869 368h1M869 349h1M869 330h1M869 311h1M869 292h1M869 273h1M869 255h1M869 236h1M869 217h1M869 198h1M869 179h1M869 161h1M888 725h1M888 706h1M888 687h1M888 669h1M888 650h1M888 631h1M888 612h1M888 593h1M888 574h1M888 556h1M888 537h1M888 518h1M888 499h1M888 480h1M888 462h1M888 443h1M888 424h1M888 405h1M888 386h1M888 368h1M888 349h1M888 330h1M888 311h1M888 292h1M888 273h1M888 255h1M888 236h1M888 217h1M888 198h1M888 179h1M888 161h1M907 725h1M907 706h1M907 687h1M907 669h1M907 650h1M907 631h1M907 612h1M907 593h1M907 574h1M907 556h1M907 537h1M907 518h1M907 499h1M907 480h1M907 462h1M907 443h1M907 424h1M907 405h1M907 386h1M907 368h1M907 349h1M907 330h1M907 311h1M907 292h1M907 273h1M907 255h1M907 236h1M907 217h1M907 198h1M907 179h1M907 161h1M926 725h1M926 706h1M926 687h1M926 669h1M926 650h1M926 631h1M926 612h1M926 593h1M926 574h1M926 556h1M926 537h1M926 518h1M926 499h1M926 480h1M926 462h1M926 443h1M926 424h1M926 405h1M926 386h1M926 368h1M926 349h1M926 330h1M926 311h1M926 292h1M926 273h1M926 255h1M926 236h1M926 217h1M926 198h1M926 179h1M926 161h1M944 725h1M944 706h1M944 687h1M944 669h1M944 650h1M944 631h1M944 612h1M944 593h1M944 574h1M944 556h1M944 537h1M944 518h1M944 499h1M944 480h1M944 462h1M944 443h1M944 424h1M944 405h1M944 386h1M944 368h1M944 349h1M944 330h1M944 311h1M944 292h1M944 273h1M944 255h1M944 236h1M944 217h1M944 198h1M944 179h1M944 161h1M963 725h1M963 706h1M963 687h1M963 669h1M963 650h1M963 631h1M963 612h1M963 593h1M963 574h1M963 556h1M963 537h1M963 518h1M963 499h1M963 480h1M963 462h1M963 443h1M963 424h1M963 405h1M963 386h1M963 368h1M963 349h1M963 330h1M963 311h1M963 292h1M963 273h1M963 255h1M963 236h1M963 217h1M963 198h1M963 179h1M963 161h1M982 725h1M982 706h1M982 687h1M982 669h1M982 650h1M982 631h1M982 612h1M982 593h1M982 574h1M982 556h1M982 537h1M982 518h1M982 499h1M982 480h1M982 462h1M982 443h1M982 424h1M982 405h1M982 386h1M982 368h1M982 349h1M982 330h1M982 311h1M982 292h1M982 273h1M982 255h1M982 236h1M982 217h1M982 198h1M982 179h1M982 161h1M1001 725h1M1001 706h1M1001 687h1M1001 669h1M1001 650h1M1001 631h1M1001 612h1M1001 593h1M1001 574h1M1001 556h1M1001 537h1M1001 518h1M1001 499h1M1001 480h1M1001 462h1M1001 443h1M1001 424h1M1001 405h1M1001 386h1M1001 368h1M1001 349h1M1001 330h1M1001 311h1M1001 292h1M1001 273h1M1001 255h1M1001 236h1M1001 217h1M1001 198h1M1001 179h1M1001 161h1M1020 725h1M1020 706h1M1020 687h1M1020 669h1M1020 650h1M1020 631h1M1020 612h1M1020 593h1M1020 574h1M1020 556h1M1020 537h1M1020 518h1M1020 499h1M1020 480h1M1020 462h1M1020 443h1M1020 424h1M1020 405h1M1020 386h1M1020 368h1M1020 349h1M1020 330h1M1020 311h1M1020 292h1M1020 273h1M1020 255h1M1020 236h1M1020 217h1M1020 198h1M1020 179h1M1020 161h1M1039 725h1M1039 706h1M1039 687h1M1039 669h1M1039 650h1M1039 631h1M1039 612h1M1039 593h1M1039 574h1M1039 556h1M1039 537h1M1039 518h1M1039 499h1M1039 480h1M1039 462h1M1039 443h1M1039 424h1M1039 405h1M1039 386h1M1039 368h1M1039 349h1M1039 330h1M1039 311h1M1039 292h1M1039 273h1M1039 255h1M1039 236h1M1039 217h1M1039 198h1M1039 179h1M1039 161h1M1057 725h1M1057 706h1M1057 687h1M1057 669h1M1057 650h1M1057 631h1M1057 612h1M1057 593h1M1057 574h1M1057 556h1M1057 537h1M1057 518h1M1057 499h1M1057 480h1M1057 462h1M1057 443h1M1057 424h1M1057 405h1M1057 386h1M1057 368h1M1057 349h1M1057 330h1M1057 311h1M1057 292h1M1057 273h1M1057 255h1M1057 236h1M1057 217h1M1057 198h1M1057 179h1M1057 161h1M1076 725h1M1076 706h1M1076 687h1M1076 669h1M1076 650h1M1076 631h1M1076 612h1M1076 593h1M1076 574h1M1076 556h1M1076 537h1M1076 518h1M1076 499h1M1076 480h1M1076 462h1M1076 443h1M1076 424h1M1076 405h1M1076 386h1M1076 368h1M1076 349h1M1076 330h1M1076 311h1M1076 292h1M1076 273h1M1076 255h1M1076 236h1M1076 217h1M1076 198h1M1076 179h1M1076 161h1M1095 725h1M1095 706h1M1095 687h1M1095 669h1M1095 650h1M1095 631h1M1095 612h1M1095 593h1M1095 574h1M1095 556h1M1095 537h1M1095 518h1M1095 499h1M1095 480h1M1095 462h1M1095 443h1M1095 424h1M1095 405h1M1095 386h1M1095 368h1M1095 349h1M1095 330h1M1095 311h1M1095 292h1M1095 273h1M1095 255h1M1095 236h1M1095 217h1M1095 198h1M1095 179h1M1095 161h1M1114 725h1M1114 706h1M1114 687h1M1114 669h1M1114 650h1M1114 631h1M1114 612h1M1114 593h1M1114 574h1M1114 556h1M1114 537h1M1114 518h1M1114 499h1M1114 480h1M1114 462h1M1114 443h1M1114 424h1M1114 405h1M1114 386h1M1114 368h1M1114 349h1M1114 330h1M1114 311h1M1114 292h1M1114 273h1M1114 255h1M1114 236h1M1114 217h1M1114 198h1M1114 179h1M1114 161h1" stroke="#3c3c3c" stroke-width="1" fill="none" transform="translate(0 0.500)"/>
<path d="M230.5 155V732M418.5 155V732M606.5 155V732M794.5 155V732M982.5 155V732M95 631.5H1118M95 443.5H1118M95 255.5H1118" stroke="#262626" stroke-width="1" fill="none"/>
<path d="M398 631.500h40M418.500 611v40" stroke="#9a0000" stroke-width="1" fill="none"/><circle cx="418.500" cy="631.500" r="4" fill="none" stroke="#9a0000" stroke-width="1"/>
<circle cx="606.3" cy="443.2" r="188" fill="none" stroke="#d6d6d6" stroke-width="1"/>
<circle cx="606.3" cy="443.2" r="169.300" fill="none" stroke="#d6d6d6" stroke-width="1"/>
<circle cx="606.3" cy="443.2" r="147" fill="none" stroke="#74302c" stroke-width="0.800" stroke-dasharray="3 2"/>
<circle cx="606.3" cy="443.2" r="158" fill="none" stroke="#74302c" stroke-width="0.800" stroke-dasharray="3 2"/>
<circle cx="606.3" cy="443.2" r="55.8" fill="none" stroke="#74302c" stroke-width="0.800" stroke-dasharray="3 2"/>
<circle cx="606.3" cy="443.2" r="67.4" fill="none" stroke="#74302c" stroke-width="0.800" stroke-dasharray="3 2"/>
<path d="M621.7 297.0L622.8 286.1M636.9 299.4L639.2 288.7M651.7 303.4L655.1 292.9M666.1 308.9L670.6 298.9M692.7 324.3L699.2 315.4M704.7 334.0L712.0 325.8M715.5 344.8L723.7 337.5M725.2 356.8L734.1 350.3M740.6 383.4L750.6 378.9M746.1 397.8L756.6 394.4M750.1 412.6L760.8 410.3M752.5 427.8L763.4 426.7M752.5 458.6L763.4 459.7M750.1 473.8L760.8 476.1M746.1 488.6L756.6 492.0M740.6 503.0L750.6 507.5M725.2 529.6L734.1 536.1M715.5 541.6L723.7 548.9M704.7 552.4L712.0 560.6M692.7 562.1L699.2 571.0M666.1 577.5L670.6 587.5M651.7 583.0L655.1 593.5M636.9 587.0L639.2 597.7M621.7 589.4L622.8 600.3M590.9 589.4L589.8 600.3M575.7 587.0L573.4 597.7M560.9 583.0L557.5 593.5M546.5 577.5L542.0 587.5M519.9 562.1L513.4 571.0M507.9 552.4L500.6 560.6M497.1 541.6L488.9 548.9M487.4 529.6L478.5 536.1M472.0 503.0L462.0 507.5M466.5 488.6L456.0 492.0M462.5 473.8L451.8 476.1M460.1 458.6L449.2 459.7M460.1 427.8L449.2 426.7M462.5 412.6L451.8 410.3M466.5 397.8L456.0 394.4M472.0 383.4L462.0 378.9M487.4 356.8L478.5 350.3M497.1 344.8L488.9 337.5M507.9 334.0L500.6 325.8M519.9 324.3L513.4 315.4M546.5 308.9L542.0 298.9M560.9 303.4L557.5 292.9M575.7 299.4L573.4 288.7M590.9 297.0L589.8 286.1M606.3 387.4L606.3 375.8M612.1 387.7L613.3 376.2M617.9 388.6L620.3 377.3M623.5 390.1L627.1 379.1M629.0 392.2L633.7 381.6M634.2 394.9L640.0 384.8M639.1 398.1L645.9 388.7M643.6 401.7L651.4 393.1M647.8 405.9L656.4 398.1M651.4 410.4L660.8 403.6M654.6 415.3L664.7 409.5M657.3 420.5L667.9 415.8M659.4 426.0L670.4 422.4M660.9 431.6L672.2 429.2M661.8 437.4L673.3 436.2M662.1 443.2L673.7 443.2M661.8 449.0L673.3 450.2M660.9 454.8L672.2 457.2M659.4 460.4L670.4 464.0M657.3 465.9L667.9 470.6M654.6 471.1L664.7 476.9M651.4 476.0L660.8 482.8M647.8 480.5L656.4 488.3M643.6 484.7L651.4 493.3M639.1 488.3L645.9 497.7M634.2 491.5L640.0 501.6M629.0 494.2L633.7 504.8M623.5 496.3L627.1 507.3M617.9 497.8L620.3 509.1M612.1 498.7L613.3 510.2M606.3 499.0L606.3 510.6M600.5 498.7L599.3 510.2M594.7 497.8L592.3 509.1M589.1 496.3L585.5 507.3M583.6 494.2L578.9 504.8M578.4 491.5L572.6 501.6M573.5 488.3L566.7 497.7M569.0 484.7L561.2 493.3M564.8 480.5L556.2 488.3M561.2 476.0L551.8 482.8M558.0 471.1L547.9 476.9M555.3 465.9L544.7 470.6M553.2 460.4L542.2 464.0M551.7 454.8L540.4 457.2M550.8 449.0L539.3 450.2M550.5 443.2L538.9 443.2M550.8 437.4L539.3 436.2M551.7 431.6L540.4 429.2M553.2 426.0L542.2 422.4M555.3 420.5L544.7 415.8M558.0 415.3L547.9 409.5M561.2 410.4L551.8 403.6M564.8 405.9L556.2 398.1M569.0 401.7L561.2 393.1M573.5 398.1L566.7 388.7M578.4 394.9L572.6 384.8M583.6 392.2L578.9 381.6M589.1 390.1L585.5 379.1M594.7 388.6L592.3 377.3M600.5 387.7L599.3 376.2M606.3 301.2L610.8 290.7L606.3 280.7L601.8 290.7ZM677.3 320.2L686.4 313.4L687.5 302.5L678.7 308.9ZM729.3 372.2L740.6 370.8L747.0 361.9L736.1 363.1ZM748.3 443.2L758.8 447.7L768.8 443.2L758.8 438.7ZM729.3 514.2L736.1 523.3L747.0 524.4L740.6 515.6ZM677.3 566.2L678.7 577.5L687.5 583.9L686.4 573.0ZM606.3 585.2L601.8 595.7L606.3 605.7L610.8 595.7ZM535.3 566.2L526.2 573.0L525.0 583.9L533.9 577.5ZM483.3 514.2L472.0 515.6L465.6 524.5L476.5 523.3ZM464.3 443.2L453.8 438.7L443.8 443.2L453.8 447.7ZM483.3 372.2L476.5 363.1L465.6 361.9L472.0 370.8ZM535.3 320.2L533.9 308.9L525.0 302.5L526.2 313.4Z" stroke="#74302c" stroke-width="0.900" fill="none"/>
<g font-family="Liberation Serif, serif" font-size="33.500" fill="#74302c" text-anchor="middle">
<text x="667.4" y="348.5">1</text>
<text x="712.2" y="393.2">2</text>
<text x="728.6" y="454.4">3</text>
<text x="712.2" y="515.5">4</text>
<text x="667.4" y="560.3">5</text>
<text x="606.3" y="576.7">6</text>
<text x="545.1" y="560.3">7</text>
<text x="500.4" y="515.6">8</text>
<text x="484.0" y="454.4">9</text>
<text x="500.4" y="393.2">10</text>
<text x="545.1" y="348.5">11</text>
<text x="606.3" y="332.1">12</text>
</g>
<rect x="617" y="293" width="9" height="9" fill="#c00024" stroke="#94505c" stroke-width="1"/>
<rect x="618" y="282" width="9" height="9" fill="#0000ae" stroke="#5c5c8c" stroke-width="1"/>
<rect x="632" y="295" width="9" height="9" fill="#c00024" stroke="#94505c" stroke-width="1"/>
<rect x="635" y="284" width="9" height="9" fill="#0000ae" stroke="#5c5c8c" stroke-width="1"/>
<rect x="647" y="299" width="9" height="9" fill="#c00024" stroke="#94505c" stroke-width="1"/>
<rect x="651" y="288" width="9" height="9" fill="#0000ae" stroke="#5c5c8c" stroke-width="1"/>
<rect x="662" y="304" width="9" height="9" fill="#c00024" stroke="#94505c" stroke-width="1"/>
<rect x="666" y="294" width="9" height="9" fill="#0000ae" stroke="#5c5c8c" stroke-width="1"/>
<rect x="688" y="320" width="9" height="9" fill="#c00024" stroke="#94505c" stroke-width="1"/>
<rect x="695" y="311" width="9" height="9" fill="#0000ae" stroke="#5c5c8c" stroke-width="1"/>
<rect x="700" y="329" width="9" height="9" fill="#c00024" stroke="#94505c" stroke-width="1"/>
<rect x="708" y="321" width="9" height="9" fill="#0000ae" stroke="#5c5c8c" stroke-width="1"/>
<rect x="711" y="340" width="9" height="9" fill="#c00024" stroke="#94505c" stroke-width="1"/>
<rect x="719" y="333" width="9" height="9" fill="#0000ae" stroke="#5c5c8c" stroke-width="1"/>
<rect x="721" y="352" width="9" height="9" fill="#c00024" stroke="#94505c" stroke-width="1"/>
<rect x="730" y="346" width="9" height="9" fill="#0000ae" stroke="#5c5c8c" stroke-width="1"/>
<rect x="736" y="379" width="9" height="9" fill="#c00024" stroke="#94505c" stroke-width="1"/>
<rect x="746" y="374" width="9" height="9" fill="#0000ae" stroke="#5c5c8c" stroke-width="1"/>
<rect x="742" y="393" width="9" height="9" fill="#c00024" stroke="#94505c" stroke-width="1"/>
<rect x="752" y="390" width="9" height="9" fill="#0000ae" stroke="#5c5c8c" stroke-width="1"/>
<rect x="746" y="408" width="9" height="9" fill="#c00024" stroke="#94505c" stroke-width="1"/>
<rect x="756" y="406" width="9" height="9" fill="#0000ae" stroke="#5c5c8c" stroke-width="1"/>
<rect x="748" y="423" width="9" height="9" fill="#c00024" stroke="#94505c" stroke-width="1"/>
<rect x="759" y="422" width="9" height="9" fill="#0000ae" stroke="#5c5c8c" stroke-width="1"/>
<rect x="748" y="454" width="9" height="9" fill="#c00024" stroke="#94505c" stroke-width="1"/>
<rect x="759" y="455" width="9" height="9" fill="#0000ae" stroke="#5c5c8c" stroke-width="1"/>
<rect x="746" y="469" width="9" height="9" fill="#c00024" stroke="#94505c" stroke-width="1"/>
<rect x="756" y="472" width="9" height="9" fill="#0000ae" stroke="#5c5c8c" stroke-width="1"/>
<rect x="742" y="484" width="9" height="9" fill="#c00024" stroke="#94505c" stroke-width="1"/>
<rect x="752" y="488" width="9" height="9" fill="#0000ae" stroke="#5c5c8c" stroke-width="1"/>
<rect x="736" y="498" width="9" height="9" fill="#c00024" stroke="#94505c" stroke-width="1"/>
<rect x="746" y="503" width="9" height="9" fill="#0000ae" stroke="#5c5c8c" stroke-width="1"/>
<rect x="721" y="525" width="9" height="9" fill="#c00024" stroke="#94505c" stroke-width="1"/>
<rect x="730" y="532" width="9" height="9" fill="#0000ae" stroke="#5c5c8c" stroke-width="1"/>
<rect x="711" y="537" width="9" height="9" fill="#c00024" stroke="#94505c" stroke-width="1"/>
<rect x="719" y="544" width="9" height="9" fill="#0000ae" stroke="#5c5c8c" stroke-width="1"/>
<rect x="700" y="548" width="9" height="9" fill="#c00024" stroke="#94505c" stroke-width="1"/>
<rect x="708" y="556" width="9" height="9" fill="#0000ae" stroke="#5c5c8c" stroke-width="1"/>
<rect x="688" y="558" width="9" height="9" fill="#c00024" stroke="#94505c" stroke-width="1"/>
<rect x="695" y="567" width="9" height="9" fill="#0000ae" stroke="#5c5c8c" stroke-width="1"/>
<rect x="662" y="573" width="9" height="9" fill="#c00024" stroke="#94505c" stroke-width="1"/>
<rect x="666" y="583" width="9" height="9" fill="#0000ae" stroke="#5c5c8c" stroke-width="1"/>
<rect x="647" y="579" width="9" height="9" fill="#c00024" stroke="#94505c" stroke-width="1"/>
<rect x="651" y="589" width="9" height="9" fill="#0000ae" stroke="#5c5c8c" stroke-width="1"/>
<rect x="632" y="582" width="9" height="9" fill="#c00024" stroke="#94505c" stroke-width="1"/>
<rect x="635" y="593" width="9" height="9" fill="#0000ae" stroke="#5c5c8c" stroke-width="1"/>
<rect x="617" y="585" width="9" height="9" fill="#c00024" stroke="#94505c" stroke-width="1"/>
<rect x="618" y="596" width="9" height="9" fill="#0000ae" stroke="#5c5c8c" stroke-width="1"/>
<rect x="586" y="585" width="9" height="9" fill="#c00024" stroke="#94505c" stroke-width="1"/>
<rect x="585" y="596" width="9" height="9" fill="#0000ae" stroke="#5c5c8c" stroke-width="1"/>
<rect x="571" y="582" width="9" height="9" fill="#c00024" stroke="#94505c" stroke-width="1"/>
<rect x="569" y="593" width="9" height="9" fill="#0000ae" stroke="#5c5c8c" stroke-width="1"/>
<rect x="556" y="579" width="9" height="9" fill="#c00024" stroke="#94505c" stroke-width="1"/>
<rect x="553" y="589" width="9" height="9" fill="#0000ae" stroke="#5c5c8c" stroke-width="1"/>
<rect x="542" y="573" width="9" height="9" fill="#c00024" stroke="#94505c" stroke-width="1"/>
<rect x="538" y="583" width="9" height="9" fill="#0000ae" stroke="#5c5c8c" stroke-width="1"/>
<rect x="515" y="558" width="9" height="9" fill="#c00024" stroke="#94505c" stroke-width="1"/>
<rect x="509" y="567" width="9" height="9" fill="#0000ae" stroke="#5c5c8c" stroke-width="1"/>
<rect x="503" y="548" width="9" height="9" fill="#c00024" stroke="#94505c" stroke-width="1"/>
<rect x="496" y="556" width="9" height="9" fill="#0000ae" stroke="#5c5c8c" stroke-width="1"/>
<rect x="493" y="537" width="9" height="9" fill="#c00024" stroke="#94505c" stroke-width="1"/>
<rect x="484" y="544" width="9" height="9" fill="#0000ae" stroke="#5c5c8c" stroke-width="1"/>
<rect x="483" y="525" width="9" height="9" fill="#c00024" stroke="#94505c" stroke-width="1"/>
<rect x="474" y="532" width="9" height="9" fill="#0000ae" stroke="#5c5c8c" stroke-width="1"/>
<rect x="468" y="498" width="9" height="9" fill="#c00024" stroke="#94505c" stroke-width="1"/>
<rect x="457" y="503" width="9" height="9" fill="#0000ae" stroke="#5c5c8c" stroke-width="1"/>
<rect x="462" y="484" width="9" height="9" fill="#c00024" stroke="#94505c" stroke-width="1"/>
<rect x="452" y="488" width="9" height="9" fill="#0000ae" stroke="#5c5c8c" stroke-width="1"/>
<rect x="458" y="469" width="9" height="9" fill="#c00024" stroke="#94505c" stroke-width="1"/>
<rect x="447" y="472" width="9" height="9" fill="#0000ae" stroke="#5c5c8c" stroke-width="1"/>
<rect x="456" y="454" width="9" height="9" fill="#c00024" stroke="#94505c" stroke-width="1"/>
<rect x="445" y="455" width="9" height="9" fill="#0000ae" stroke="#5c5c8c" stroke-width="1"/>
<rect x="456" y="423" width="9" height="9" fill="#c00024" stroke="#94505c" stroke-width="1"/>
<rect x="445" y="422" width="9" height="9" fill="#0000ae" stroke="#5c5c8c" stroke-width="1"/>
<rect x="458" y="408" width="9" height="9" fill="#c00024" stroke="#94505c" stroke-width="1"/>
<rect x="447" y="406" width="9" height="9" fill="#0000ae" stroke="#5c5c8c" stroke-width="1"/>
<rect x="462" y="393" width="9" height="9" fill="#c00024" stroke="#94505c" stroke-width="1"/>
<rect x="452" y="390" width="9" height="9" fill="#0000ae" stroke="#5c5c8c" stroke-width="1"/>
<rect x="468" y="379" width="9" height="9" fill="#c00024" stroke="#94505c" stroke-width="1"/>
<rect x="457" y="374" width="9" height="9" fill="#0000ae" stroke="#5c5c8c" stroke-width="1"/>
<rect x="483" y="352" width="9" height="9" fill="#c00024" stroke="#94505c" stroke-width="1"/>
<rect x="474" y="346" width="9" height="9" fill="#0000ae" stroke="#5c5c8c" stroke-width="1"/>
<rect x="493" y="340" width="9" height="9" fill="#c00024" stroke="#94505c" stroke-width="1"/>
<rect x="484" y="333" width="9" height="9" fill="#0000ae" stroke="#5c5c8c" stroke-width="1"/>
<rect x="503" y="329" width="9" height="9" fill="#c00024" stroke="#94505c" stroke-width="1"/>
<rect x="496" y="321" width="9" height="9" fill="#0000ae" stroke="#5c5c8c" stroke-width="1"/>
<rect x="515" y="320" width="9" height="9" fill="#c00024" stroke="#94505c" stroke-width="1"/>
<rect x="509" y="311" width="9" height="9" fill="#0000ae" stroke="#5c5c8c" stroke-width="1"/>
<rect x="542" y="304" width="9" height="9" fill="#c00024" stroke="#94505c" stroke-width="1"/>
<rect x="538" y="294" width="9" height="9" fill="#0000ae" stroke="#5c5c8c" stroke-width="1"/>
<rect x="556" y="299" width="9" height="9" fill="#c00024" stroke="#94505c" stroke-width="1"/>
<rect x="553" y="288" width="9" height="9" fill="#0000ae" stroke="#5c5c8c" stroke-width="1"/>
<rect x="571" y="295" width="9" height="9" fill="#c00024" stroke="#94505c" stroke-width="1"/>
<rect x="569" y="284" width="9" height="9" fill="#0000ae" stroke="#5c5c8c" stroke-width="1"/>
<rect x="586" y="293" width="9" height="9" fill="#c00024" stroke="#94505c" stroke-width="1"/>
<rect x="585" y="282" width="9" height="9" fill="#0000ae" stroke="#5c5c8c" stroke-width="1"/>
<rect x="602" y="383" width="9" height="9" fill="#c00024" stroke="#94505c" stroke-width="1"/>
<rect x="608" y="383" width="9" height="9" fill="#c00024" stroke="#94505c" stroke-width="1"/>
<rect x="613" y="384" width="9" height="9" fill="#c00024" stroke="#94505c" stroke-width="1"/>
<rect x="619" y="386" width="9" height="9" fill="#c00024" stroke="#94505c" stroke-width="1"/>
<rect x="624" y="388" width="9" height="9" fill="#c00024" stroke="#94505c" stroke-width="1"/>
<rect x="630" y="390" width="9" height="9" fill="#c00024" stroke="#94505c" stroke-width="1"/>
<rect x="635" y="394" width="9" height="9" fill="#c00024" stroke="#94505c" stroke-width="1"/>
<rect x="639" y="397" width="9" height="9" fill="#c00024" stroke="#94505c" stroke-width="1"/>
<rect x="643" y="401" width="9" height="9" fill="#c00024" stroke="#94505c" stroke-width="1"/>
<rect x="647" y="406" width="9" height="9" fill="#c00024" stroke="#94505c" stroke-width="1"/>
<rect x="650" y="411" width="9" height="9" fill="#c00024" stroke="#94505c" stroke-width="1"/>
<rect x="653" y="416" width="9" height="9" fill="#c00024" stroke="#94505c" stroke-width="1"/>
<rect x="655" y="421" width="9" height="9" fill="#c00024" stroke="#94505c" stroke-width="1"/>
<rect x="656" y="427" width="9" height="9" fill="#c00024" stroke="#94505c" stroke-width="1"/>
<rect x="657" y="433" width="9" height="9" fill="#c00024" stroke="#94505c" stroke-width="1"/>
<rect x="658" y="439" width="9" height="9" fill="#c00024" stroke="#94505c" stroke-width="1"/>
<rect x="657" y="445" width="9" height="9" fill="#c00024" stroke="#94505c" stroke-width="1"/>
<rect x="656" y="450" width="9" height="9" fill="#c00024" stroke="#94505c" stroke-width="1"/>
<rect x="655" y="456" width="9" height="9" fill="#c00024" stroke="#94505c" stroke-width="1"/>
<rect x="653" y="461" width="9" height="9" fill="#c00024" stroke="#94505c" stroke-width="1"/>
<rect x="650" y="467" width="9" height="9" fill="#c00024" stroke="#94505c" stroke-width="1"/>
<rect x="647" y="471" width="9" height="9" fill="#c00024" stroke="#94505c" stroke-width="1"/>
<rect x="643" y="476" width="9" height="9" fill="#c00024" stroke="#94505c" stroke-width="1"/>
<rect x="639" y="480" width="9" height="9" fill="#c00024" stroke="#94505c" stroke-width="1"/>
<rect x="635" y="484" width="9" height="9" fill="#c00024" stroke="#94505c" stroke-width="1"/>
<rect x="630" y="487" width="9" height="9" fill="#c00024" stroke="#94505c" stroke-width="1"/>
<rect x="624" y="490" width="9" height="9" fill="#c00024" stroke="#94505c" stroke-width="1"/>
<rect x="619" y="492" width="9" height="9" fill="#c00024" stroke="#94505c" stroke-width="1"/>
<rect x="613" y="493" width="9" height="9" fill="#c00024" stroke="#94505c" stroke-width="1"/>
<rect x="608" y="494" width="9" height="9" fill="#c00024" stroke="#94505c" stroke-width="1"/>
<rect x="602" y="494" width="9" height="9" fill="#c00024" stroke="#94505c" stroke-width="1"/>
<rect x="596" y="494" width="9" height="9" fill="#c00024" stroke="#94505c" stroke-width="1"/>
<rect x="590" y="493" width="9" height="9" fill="#c00024" stroke="#94505c" stroke-width="1"/>
<rect x="585" y="492" width="9" height="9" fill="#c00024" stroke="#94505c" stroke-width="1"/>
<rect x="579" y="490" width="9" height="9" fill="#c00024" stroke="#94505c" stroke-width="1"/>
<rect x="574" y="487" width="9" height="9" fill="#c00024" stroke="#94505c" stroke-width="1"/>
<rect x="569" y="484" width="9" height="9" fill="#c00024" stroke="#94505c" stroke-width="1"/>
<rect x="564" y="480" width="9" height="9" fill="#c00024" stroke="#94505c" stroke-width="1"/>
<rect x="560" y="476" width="9" height="9" fill="#c00024" stroke="#94505c" stroke-width="1"/>
<rect x="557" y="471" width="9" height="9" fill="#c00024" stroke="#94505c" stroke-width="1"/>
<rect x="553" y="467" width="9" height="9" fill="#c00024" stroke="#94505c" stroke-width="1"/>
<rect x="551" y="461" width="9" height="9" fill="#c00024" stroke="#94505c" stroke-width="1"/>
<rect x="549" y="456" width="9" height="9" fill="#c00024" stroke="#94505c" stroke-width="1"/>
<rect x="547" y="450" width="9" height="9" fill="#c00024" stroke="#94505c" stroke-width="1"/>
<rect x="546" y="445" width="9" height="9" fill="#c00024" stroke="#94505c" stroke-width="1"/>
<rect x="546" y="439" width="9" height="9" fill="#c00024" stroke="#94505c" stroke-width="1"/>
<rect x="546" y="433" width="9" height="9" fill="#c00024" stroke="#94505c" stroke-width="1"/>
<rect x="547" y="427" width="9" height="9" fill="#c00024" stroke="#94505c" stroke-width="1"/>
<rect x="549" y="421" width="9" height="9" fill="#c00024" stroke="#94505c" stroke-width="1"/>
<rect x="551" y="416" width="9" height="9" fill="#c00024" stroke="#94505c" stroke-width="1"/>
<rect x="553" y="411" width="9" height="9" fill="#c00024" stroke="#94505c" stroke-width="1"/>
<rect x="557" y="406" width="9" height="9" fill="#c00024" stroke="#94505c" stroke-width="1"/>
<rect x="560" y="401" width="9" height="9" fill="#c00024" stroke="#94505c" stroke-width="1"/>
<rect x="564" y="397" width="9" height="9" fill="#c00024" stroke="#94505c" stroke-width="1"/>
<rect x="569" y="394" width="9" height="9" fill="#c00024" stroke="#94505c" stroke-width="1"/>
<rect x="574" y="390" width="9" height="9" fill="#c00024" stroke="#94505c" stroke-width="1"/>
<rect x="579" y="388" width="9" height="9" fill="#c00024" stroke="#94505c" stroke-width="1"/>
<rect x="585" y="386" width="9" height="9" fill="#c00024" stroke="#94505c" stroke-width="1"/>
<rect x="590" y="384" width="9" height="9" fill="#c00024" stroke="#94505c" stroke-width="1"/>
<rect x="596" y="383" width="9" height="9" fill="#c00024" stroke="#94505c" stroke-width="1"/>
<rect x="602" y="371" width="9" height="9" fill="#0000ae" stroke="#5c5c8c" stroke-width="1"/>
<rect x="609" y="372" width="9" height="9" fill="#0000ae" stroke="#5c5c8c" stroke-width="1"/>
<rect x="616" y="373" width="9" height="9" fill="#0000ae" stroke="#5c5c8c" stroke-width="1"/>
<rect x="623" y="375" width="9" height="9" fill="#0000ae" stroke="#5c5c8c" stroke-width="1"/>
<rect x="629" y="377" width="9" height="9" fill="#0000ae" stroke="#5c5c8c" stroke-width="1"/>
<rect x="636" y="380" width="9" height="9" fill="#0000ae" stroke="#5c5c8c" stroke-width="1"/>
<rect x="641" y="384" width="9" height="9" fill="#0000ae" stroke="#5c5c8c" stroke-width="1"/>
<rect x="647" y="389" width="9" height="9" fill="#0000ae" stroke="#5c5c8c" stroke-width="1"/>
<rect x="652" y="394" width="9" height="9" fill="#0000ae" stroke="#5c5c8c" stroke-width="1"/>
<rect x="656" y="399" width="9" height="9" fill="#0000ae" stroke="#5c5c8c" stroke-width="1"/>
<rect x="660" y="405" width="9" height="9" fill="#0000ae" stroke="#5c5c8c" stroke-width="1"/>
<rect x="663" y="411" width="9" height="9" fill="#0000ae" stroke="#5c5c8c" stroke-width="1"/>
<rect x="666" y="418" width="9" height="9" fill="#0000ae" stroke="#5c5c8c" stroke-width="1"/>
<rect x="668" y="425" width="9" height="9" fill="#0000ae" stroke="#5c5c8c" stroke-width="1"/>
<rect x="669" y="432" width="9" height="9" fill="#0000ae" stroke="#5c5c8c" stroke-width="1"/>
<rect x="669" y="439" width="9" height="9" fill="#0000ae" stroke="#5c5c8c" stroke-width="1"/>
<rect x="669" y="446" width="9" height="9" fill="#0000ae" stroke="#5c5c8c" stroke-width="1"/>
<rect x="668" y="453" width="9" height="9" fill="#0000ae" stroke="#5c5c8c" stroke-width="1"/>
<rect x="666" y="460" width="9" height="9" fill="#0000ae" stroke="#5c5c8c" stroke-width="1"/>
<rect x="663" y="466" width="9" height="9" fill="#0000ae" stroke="#5c5c8c" stroke-width="1"/>
<rect x="660" y="472" width="9" height="9" fill="#0000ae" stroke="#5c5c8c" stroke-width="1"/>
<rect x="656" y="478" width="9" height="9" fill="#0000ae" stroke="#5c5c8c" stroke-width="1"/>
<rect x="652" y="484" width="9" height="9" fill="#0000ae" stroke="#5c5c8c" stroke-width="1"/>
<rect x="647" y="489" width="9" height="9" fill="#0000ae" stroke="#5c5c8c" stroke-width="1"/>
<rect x="641" y="493" width="9" height="9" fill="#0000ae" stroke="#5c5c8c" stroke-width="1"/>
<rect x="636" y="497" width="9" height="9" fill="#0000ae" stroke="#5c5c8c" stroke-width="1"/>
<rect x="629" y="500" width="9" height="9" fill="#0000ae" stroke="#5c5c8c" stroke-width="1"/>
<rect x="623" y="503" width="9" height="9" fill="#0000ae" stroke="#5c5c8c" stroke-width="1"/>
<rect x="616" y="505" width="9" height="9" fill="#0000ae" stroke="#5c5c8c" stroke-width="1"/>
<rect x="609" y="506" width="9" height="9" fill="#0000ae" stroke="#5c5c8c" stroke-width="1"/>
<rect x="602" y="506" width="9" height="9" fill="#0000ae" stroke="#5c5c8c" stroke-width="1"/>
<rect x="595" y="506" width="9" height="9" fill="#0000ae" stroke="#5c5c8c" stroke-width="1"/>
<rect x="588" y="505" width="9" height="9" fill="#0000ae" stroke="#5c5c8c" stroke-width="1"/>
<rect x="581" y="503" width="9" height="9" fill="#0000ae" stroke="#5c5c8c" stroke-width="1"/>
<rect x="574" y="500" width="9" height="9" fill="#0000ae" stroke="#5c5c8c" stroke-width="1"/>
<rect x="568" y="497" width="9" height="9" fill="#0000ae" stroke="#5c5c8c" stroke-width="1"/>
<rect x="562" y="493" width="9" height="9" fill="#0000ae" stroke="#5c5c8c" stroke-width="1"/>
<rect x="557" y="489" width="9" height="9" fill="#0000ae" stroke="#5c5c8c" stroke-width="1"/>
<rect x="552" y="484" width="9" height="9" fill="#0000ae" stroke="#5c5c8c" stroke-width="1"/>
<rect x="547" y="478" width="9" height="9" fill="#0000ae" stroke="#5c5c8c" stroke-width="1"/>
<rect x="543" y="472" width="9" height="9" fill="#0000ae" stroke="#5c5c8c" stroke-width="1"/>
<rect x="540" y="466" width="9" height="9" fill="#0000ae" stroke="#5c5c8c" stroke-width="1"/>
<rect x="538" y="460" width="9" height="9" fill="#0000ae" stroke="#5c5c8c" stroke-width="1"/>
<rect x="536" y="453" width="9" height="9" fill="#0000ae" stroke="#5c5c8c" stroke-width="1"/>
<rect x="535" y="446" width="9" height="9" fill="#0000ae" stroke="#5c5c8c" stroke-width="1"/>
<rect x="534" y="439" width="9" height="9" fill="#0000ae" stroke="#5c5c8c" stroke-width="1"/>
<rect x="535" y="432" width="9" height="9" fill="#0000ae" stroke="#5c5c8c" stroke-width="1"/>
<rect x="536" y="425" width="9" height="9" fill="#0000ae" stroke="#5c5c8c" stroke-width="1"/>
<rect x="538" y="418" width="9" height="9" fill="#0000ae" stroke="#5c5c8c" stroke-width="1"/>
<rect x="540" y="411" width="9" height="9" fill="#0000ae" stroke="#5c5c8c" stroke-width="1"/>
<rect x="543" y="405" width="9" height="9" fill="#0000ae" stroke="#5c5c8c" stroke-width="1"/>
<rect x="547" y="399" width="9" height="9" fill="#0000ae" stroke="#5c5c8c" stroke-width="1"/>
<rect x="552" y="394" width="9" height="9" fill="#0000ae" stroke="#5c5c8c" stroke-width="1"/>
<rect x="557" y="389" width="9" height="9" fill="#0000ae" stroke="#5c5c8c" stroke-width="1"/>
<rect x="562" y="384" width="9" height="9" fill="#0000ae" stroke="#5c5c8c" stroke-width="1"/>
<rect x="568" y="380" width="9" height="9" fill="#0000ae" stroke="#5c5c8c" stroke-width="1"/>
<rect x="574" y="377" width="9" height="9" fill="#0000ae" stroke="#5c5c8c" stroke-width="1"/>
<rect x="581" y="375" width="9" height="9" fill="#0000ae" stroke="#5c5c8c" stroke-width="1"/>
<rect x="588" y="373" width="9" height="9" fill="#0000ae" stroke="#5c5c8c" stroke-width="1"/>
<rect x="595" y="372" width="9" height="9" fill="#0000ae" stroke="#5c5c8c" stroke-width="1"/>
<rect x="602" y="297" width="9" height="9" fill="#0000ae" stroke="#5c5c8c" stroke-width="1"/>
<rect x="606" y="286" width="9" height="9" fill="#0000ae" stroke="#5c5c8c" stroke-width="1"/>
<rect x="602" y="276" width="9" height="9" fill="#0000ae" stroke="#5c5c8c" stroke-width="1"/>
<rect x="597" y="286" width="9" height="9" fill="#0000ae" stroke="#5c5c8c" stroke-width="1"/>
<rect x="673" y="316" width="9" height="9" fill="#0000ae" stroke="#5c5c8c" stroke-width="1"/>
<rect x="682" y="309" width="9" height="9" fill="#0000ae" stroke="#5c5c8c" stroke-width="1"/>
<rect x="683" y="298" width="9" height="9" fill="#0000ae" stroke="#5c5c8c" stroke-width="1"/>
<rect x="674" y="304" width="9" height="9" fill="#0000ae" stroke="#5c5c8c" stroke-width="1"/>
<rect x="725" y="368" width="9" height="9" fill="#0000ae" stroke="#5c5c8c" stroke-width="1"/>
<rect x="736" y="366" width="9" height="9" fill="#0000ae" stroke="#5c5c8c" stroke-width="1"/>
<rect x="743" y="357" width="9" height="9" fill="#0000ae" stroke="#5c5c8c" stroke-width="1"/>
<rect x="732" y="359" width="9" height="9" fill="#0000ae" stroke="#5c5c8c" stroke-width="1"/>
<rect x="744" y="439" width="9" height="9" fill="#0000ae" stroke="#5c5c8c" stroke-width="1"/>
<rect x="754" y="443" width="9" height="9" fill="#0000ae" stroke="#5c5c8c" stroke-width="1"/>
<rect x="764" y="439" width="9" height="9" fill="#0000ae" stroke="#5c5c8c" stroke-width="1"/>
<rect x="754" y="434" width="9" height="9" fill="#0000ae" stroke="#5c5c8c" stroke-width="1"/>
<rect x="725" y="510" width="9" height="9" fill="#0000ae" stroke="#5c5c8c" stroke-width="1"/>
<rect x="732" y="519" width="9" height="9" fill="#0000ae" stroke="#5c5c8c" stroke-width="1"/>
<rect x="743" y="520" width="9" height="9" fill="#0000ae" stroke="#5c5c8c" stroke-width="1"/>
<rect x="736" y="511" width="9" height="9" fill="#0000ae" stroke="#5c5c8c" stroke-width="1"/>
<rect x="673" y="562" width="9" height="9" fill="#0000ae" stroke="#5c5c8c" stroke-width="1"/>
<rect x="674" y="573" width="9" height="9" fill="#0000ae" stroke="#5c5c8c" stroke-width="1"/>
<rect x="683" y="579" width="9" height="9" fill="#0000ae" stroke="#5c5c8c" stroke-width="1"/>
<rect x="682" y="569" width="9" height="9" fill="#0000ae" stroke="#5c5c8c" stroke-width="1"/>
<rect x="602" y="581" width="9" height="9" fill="#0000ae" stroke="#5c5c8c" stroke-width="1"/>
<rect x="597" y="591" width="9" height="9" fill="#0000ae" stroke="#5c5c8c" stroke-width="1"/>
<rect x="602" y="601" width="9" height="9" fill="#0000ae" stroke="#5c5c8c" stroke-width="1"/>
<rect x="606" y="591" width="9" height="9" fill="#0000ae" stroke="#5c5c8c" stroke-width="1"/>
<rect x="531" y="562" width="9" height="9" fill="#0000ae" stroke="#5c5c8c" stroke-width="1"/>
<rect x="522" y="569" width="9" height="9" fill="#0000ae" stroke="#5c5c8c" stroke-width="1"/>
<rect x="521" y="579" width="9" height="9" fill="#0000ae" stroke="#5c5c8c" stroke-width="1"/>
<rect x="529" y="573" width="9" height="9" fill="#0000ae" stroke="#5c5c8c" stroke-width="1"/>
<rect x="479" y="510" width="9" height="9" fill="#0000ae" stroke="#5c5c8c" stroke-width="1"/>
<rect x="467" y="511" width="9" height="9" fill="#0000ae" stroke="#5c5c8c" stroke-width="1"/>
<rect x="461" y="520" width="9" height="9" fill="#0000ae" stroke="#5c5c8c" stroke-width="1"/>
<rect x="472" y="519" width="9" height="9" fill="#0000ae" stroke="#5c5c8c" stroke-width="1"/>
<rect x="460" y="439" width="9" height="9" fill="#0000ae" stroke="#5c5c8c" stroke-width="1"/>
<rect x="449" y="434" width="9" height="9" fill="#0000ae" stroke="#5c5c8c" stroke-width="1"/>
<rect x="439" y="439" width="9" height="9" fill="#0000ae" stroke="#5c5c8c" stroke-width="1"/>
<rect x="449" y="443" width="9" height="9" fill="#0000ae" stroke="#5c5c8c" stroke-width="1"/>
<rect x="479" y="368" width="9" height="9" fill="#0000ae" stroke="#5c5c8c" stroke-width="1"/>
<rect x="472" y="359" width="9" height="9" fill="#0000ae" stroke="#5c5c8c" stroke-width="1"/>
<rect x="461" y="357" width="9" height="9" fill="#0000ae" stroke="#5c5c8c" stroke-width="1"/>
<rect x="467" y="366" width="9" height="9" fill="#0000ae" stroke="#5c5c8c" stroke-width="1"/>
<rect x="531" y="316" width="9" height="9" fill="#0000ae" stroke="#5c5c8c" stroke-width="1"/>
<rect x="529" y="304" width="9" height="9" fill="#0000ae" stroke="#5c5c8c" stroke-width="1"/>
<rect x="521" y="298" width="9" height="9" fill="#0000ae" stroke="#5c5c8c" stroke-width="1"/>
<rect x="522" y="309" width="9" height="9" fill="#0000ae" stroke="#5c5c8c" stroke-width="1"/>
<rect x="663" y="333" width="9" height="9" fill="#0000ae" stroke="#5c5c8c" stroke-width="1"/>
<rect x="708" y="378" width="9" height="9" fill="#0000ae" stroke="#5c5c8c" stroke-width="1"/>
<rect x="724" y="439" width="9" height="9" fill="#0000ae" stroke="#5c5c8c" stroke-width="1"/>
<rect x="708" y="500" width="9" height="9" fill="#0000ae" stroke="#5c5c8c" stroke-width="1"/>
<rect x="663" y="545" width="9" height="9" fill="#0000ae" stroke="#5c5c8c" stroke-width="1"/>
<rect x="602" y="561" width="9" height="9" fill="#0000ae" stroke="#5c5c8c" stroke-width="1"/>
<rect x="541" y="545" width="9" height="9" fill="#0000ae" stroke="#5c5c8c" stroke-width="1"/>
<rect x="496" y="500" width="9" height="9" fill="#0000ae" stroke="#5c5c8c" stroke-width="1"/>
<rect x="479" y="439" width="9" height="9" fill="#0000ae" stroke="#5c5c8c" stroke-width="1"/>
<rect x="496" y="378" width="9" height="9" fill="#0000ae" stroke="#5c5c8c" stroke-width="1"/>
<rect x="541" y="333" width="9" height="9" fill="#0000ae" stroke="#5c5c8c" stroke-width="1"/>
<rect x="602" y="316" width="9" height="9" fill="#0000ae" stroke="#5c5c8c" stroke-width="1"/>
</svg>
<!-- p50_dock.py -->
<div class="a" style="left:1133px;top:108px;width:11px;height:690px;background:#e4e4e4"></div>
<div class="a" style="left:1144px;top:108px;width:11px;height:690px;background:#ebebeb"></div>
<div class="a" style="left:1133px;top:108px;width:1px;height:24px;background:#d6d6d6"></div>
<div class="a" style="left:1155px;top:108px;width:299px;height:690px;background:#ececec;border-left:1px solid #bdbdbd;box-sizing:border-box"></div>
<div class="a" style="left:1155px;top:108px;width:299px;height:22px;background:linear-gradient(#f0f0f0,#e6e6e6 50%,#d6d6d6);border-bottom:1px solid #c2c2c2;border-left:1px solid #bdbdbd;box-sizing:content-box"></div>
<svg style="left:1155px;top:108px" width="40" height="22" viewBox="1155 108 40 22"><circle cx="1164.100" cy="118.100" r="6.800" fill="#5c5c5c"/><path d="M1161.200 115.200l5.800 5.800M1167 115.200l-5.800 5.800" stroke="#fff" stroke-width="1.900"/><circle cx="1181.900" cy="118.100" r="6.800" fill="#5c5c5c"/><path d="M1180.500 116.500v-1.600h5v4.200h-1.600" fill="none" stroke="#fff" stroke-width="1.100"/><rect x="1178.400" y="116.900" width="5" height="4.200" fill="none" stroke="#fff" stroke-width="1.100"/></svg>
<span class="t" style="left:1269.6px;top:112px;font:normal 400 11.7px/14px 'Liberation Sans',sans-serif;color:#2a2a2a;letter-spacing:0.14px;">Eigenschafteneditor</span>
<div class="a" style="left:1135px;top:340px;width:20px;height:144px;background:#1a7cf6;border-radius:6px 0 0 6px"></div>
<div class="a" style="left:1135px;top:488px;width:20px;height:82px;background:#d8d8d8;border-radius:6px 0 0 6px"></div>
<div class="a" style="left:1145.500px;top:412px;width:0;height:0"><span class="t" style="left:-60px;top:-8px;width:120px;text-align:center;font:400 13.200px/16px 'Liberation Sans',sans-serif;color:#fff;transform:rotate(-90deg);letter-spacing:0.1px">Eigenschafteneditor</span></div>
<div class="a" style="left:1145.500px;top:529px;width:0;height:0"><span class="t" style="left:-40px;top:-8px;width:80px;text-align:center;font:400 13.200px/16px 'Liberation Sans',sans-serif;color:#333;transform:rotate(-90deg);letter-spacing:0.25px">Layerliste</span></div>
<span class="t" style="left:1168.7px;top:147px;font:normal 400 13.6px/16px 'Liberation Sans',sans-serif;color:#161616;letter-spacing:-0.25px;">Auswahl:</span>
<div class="a" style="left:1230.5px;top:143.5px;width:210.5px;height:20.8px;background:#fff;border-radius:5.500px;box-shadow:0 0 0 0.800px #c9ccd3,0 1px 1.500px rgba(0,0,0,0.18)"></div><svg style="left:1422.8px;top:145.8px" width="17" height="17" viewBox="0 0 17 17"><rect x="0.300" y="0.300" width="16.200" height="16.200" rx="4.200" fill="#1478f6"/><path d="M5.300 6.700l3.100-3 3.100 3M5.300 10.300l3.100 3 3.100-3" fill="none" stroke="#fff" stroke-width="1.500" stroke-linecap="round" stroke-linejoin="round"/></svg>
<span class="t" style="left:1234.5px;top:147px;font:normal 400 13.6px/16px 'Liberation Sans',sans-serif;color:#161616;letter-spacing:-0.10px;">Text [12]</span>
<span class="t" style="left:1175.3px;top:170px;font:normal 400 11.7px/14px 'Liberation Sans',sans-serif;color:#1c1c1c;letter-spacing:0.04px;">Allgemeine Eigenschaften</span>
<div class="a" style="left:1168px;top:183.500px;width:273.500px;height:184.500px;background:#e4e4e4;border-radius:5px;box-shadow:0 0 0 0.800px #dadada"></div>
<span class="t" style="left:1175.3px;top:374px;font:normal 400 11.7px/14px 'Liberation Sans',sans-serif;color:#1c1c1c;letter-spacing:0.09px;">Spezifische Eigenschaften</span>
<div class="a" style="left:1168px;top:388px;width:273.500px;height:402px;background:#e4e4e4;border-radius:5px;box-shadow:0 0 0 0.800px #dadada"></div>
<span class="t" style="left:1260.3px;top:199px;font:normal 400 13.6px/16px 'Liberation Sans',sans-serif;color:#161616;letter-spacing:-0.30px;">Layer:</span>
<div class="a" style="left:1299.7px;top:196px;width:104.6px;height:20.6px;background:#fff;border-radius:5.500px;box-shadow:0 0 0 0.800px #c9ccd3,0 1px 1.500px rgba(0,0,0,0.18)"></div><svg style="left:1386.1px;top:198.2px" width="17" height="17" viewBox="0 0 17 17"><rect x="0.300" y="0.300" width="16.200" height="16.200" rx="4.200" fill="#1478f6"/><path d="M5.300 6.700l3.100-3 3.100 3M5.300 10.300l3.100 3 3.100-3" fill="none" stroke="#fff" stroke-width="1.500" stroke-linecap="round" stroke-linejoin="round"/></svg>
<div class="a" style="left:1303.2px;top:201.8px;width:15px;height:8.500px;box-sizing:border-box;border:1px solid #111;background:#fff"></div>
<span class="t" style="left:1325.0px;top:199px;font:normal 400 13.6px/16px 'Liberation Sans',sans-serif;color:#161616;">0</span>
<div class="a" style="left:1407px;top:193px;width:26px;height:26px;box-sizing:border-box;border:1px solid #b4b4b4;background:#ececec"></div>
<div class="a" style="left:1413.300px;top:201.2px;width:13.200px;height:1.600px;background:#7a7a7a"></div>
<div class="a" style="left:1413.300px;top:205.8px;width:13.200px;height:1.600px;background:#7a7a7a"></div>
<div class="a" style="left:1413.300px;top:210.4px;width:13.200px;height:1.600px;background:#7a7a7a"></div>
<span class="t" style="left:1259.3px;top:225px;font:normal 400 13.6px/16px 'Liberation Sans',sans-serif;color:#161616;letter-spacing:-0.40px;">Farbe:</span>
<div class="a" style="left:1299.7px;top:222.4px;width:132.5px;height:20.2px;background:#fff;border-radius:5.500px;box-shadow:0 0 0 0.800px #c9ccd3,0 1px 1.500px rgba(0,0,0,0.18)"></div><svg style="left:1414px;top:224.4px" width="17" height="17" viewBox="0 0 17 17"><rect x="0.300" y="0.300" width="16.200" height="16.200" rx="4.200" fill="#1478f6"/><path d="M5.300 6.700l3.100-3 3.100 3M5.300 10.300l3.100 3 3.100-3" fill="none" stroke="#fff" stroke-width="1.500" stroke-linecap="round" stroke-linejoin="round"/></svg>
<div class="a" style="left:1303.2px;top:227.8px;width:15px;height:8.500px;box-sizing:border-box;border:1px solid #111;background:#fff"></div>
<span class="t" style="left:1325.0px;top:225px;font:normal 400 13.6px/16px 'Liberation Sans',sans-serif;color:#161616;letter-spacing:-0.30px;">Von Layer</span>
<span class="t" style="left:1223.8px;top:248px;font:normal 400 13.6px/16px 'Liberation Sans',sans-serif;color:#161616;letter-spacing:-0.10px;">Linienbreite:</span>
<div class="a" style="left:1299.7px;top:246px;width:132.5px;height:20.2px;background:#fff;border-radius:5.500px;box-shadow:0 0 0 0.800px #c9ccd3,0 1px 1.500px rgba(0,0,0,0.18)"></div><svg style="left:1414px;top:248px" width="17" height="17" viewBox="0 0 17 17"><rect x="0.300" y="0.300" width="16.200" height="16.200" rx="4.200" fill="#1478f6"/><path d="M5.300 6.700l3.100-3 3.100 3M5.300 10.300l3.100 3 3.100-3" fill="none" stroke="#fff" stroke-width="1.500" stroke-linecap="round" stroke-linejoin="round"/></svg>
<div class="a" style="left:1303.200px;top:256px;width:15.800px;height:1px;background:#222"></div>
<span class="t" style="left:1325.0px;top:249px;font:normal 400 13.6px/16px 'Liberation Sans',sans-serif;color:#161616;letter-spacing:-0.30px;">Von Layer</span>
<span class="t" style="left:1238.9px;top:272px;font:normal 400 13.6px/16px 'Liberation Sans',sans-serif;color:#161616;letter-spacing:-0.06px;">Linientyp:</span>
<div class="a" style="left:1299.7px;top:270px;width:132.5px;height:19.8px;background:#fff;border-radius:5.500px;box-shadow:0 0 0 0.800px #c9ccd3,0 1px 1.500px rgba(0,0,0,0.18)"></div><svg style="left:1414px;top:271.8px" width="17" height="17" viewBox="0 0 17 17"><rect x="0.300" y="0.300" width="16.200" height="16.200" rx="4.200" fill="#1478f6"/><path d="M5.300 6.700l3.100-3 3.100 3M5.300 10.300l3.100 3 3.100-3" fill="none" stroke="#fff" stroke-width="1.500" stroke-linecap="round" stroke-linejoin="round"/></svg>
<span class="t" style="left:1303.5px;top:271px;font:normal 400 13.6px/16px 'Liberation Sans',sans-serif;color:#161616;letter-spacing:-0.36px;">Von Layer</span>
<span class="t" style="left:1177.6px;top:296px;font:normal 400 13.6px/16px 'Liberation Sans',sans-serif;color:#161616;letter-spacing:-0.06px;">Linientypskalierung:</span>
<div class="a" style="left:1299.7px;top:293.8px;width:132.5px;height:19.8px;background:#fff;box-sizing:border-box;border-top:1px solid #dcdcdc;border-bottom:1px solid #b2b2b2"></div>
<span class="t" style="left:1301.0px;top:296px;font:normal 400 13.6px/16px 'Liberation Sans',sans-serif;color:#161616;">1</span>
<span class="t" style="left:1223.2px;top:319px;font:normal 400 13.6px/16px 'Liberation Sans',sans-serif;color:#161616;letter-spacing:-0.27px;">Reihenfolge:</span>
<div class="a" style="left:1299.7px;top:317px;width:132.5px;height:19.6px;background:#fff;box-sizing:border-box;border-top:1px solid #dcdcdc;border-bottom:1px solid #b2b2b2"></div>
<span class="t" style="left:1301.0px;top:319px;font:normal 400 13.6px/16px 'Liberation Sans',sans-serif;color:#161616;letter-spacing:-0.55px;"><span style="position:relative;top:3.4px;font-size:1.32em;margin:0 -0.8px;line-height:0">*</span>VARIIERT<span style="position:relative;top:3.4px;font-size:1.32em;margin:0 -0.8px;line-height:0">*</span></span>
<span class="t" style="left:1251.6px;top:342px;font:normal 400 13.6px/16px 'Liberation Sans',sans-serif;color:#161616;letter-spacing:-0.31px;">Handle:</span>
<div class="a" style="left:1299.7px;top:340.2px;width:132.5px;height:19.2px;background:#fff;box-sizing:border-box;border-top:1px solid #dcdcdc;border-bottom:1px solid #b2b2b2"></div>
<span class="t" style="left:1301.0px;top:342px;font:normal 400 13.6px/16px 'Liberation Sans',sans-serif;color:#b9b9b9;letter-spacing:-0.55px;"><span style="position:relative;top:3.4px;font-size:1.32em;margin:0 -0.8px;line-height:0">*</span>VARIIERT<span style="position:relative;top:3.4px;font-size:1.32em;margin:0 -0.8px;line-height:0">*</span></span>
<span class="t" style="left:1217.5px;top:400px;font:normal 400 13.6px/16px 'Liberation Sans',sans-serif;color:#161616;letter-spacing:-0.32px;">Einfach:</span>
<div class="a" style="left:1267.7px;top:398px;width:164.5px;height:20px;background:#fff;border-radius:5.500px;box-shadow:0 0 0 0.800px #c9ccd3,0 1px 1.500px rgba(0,0,0,0.18)"></div><svg style="left:1414px;top:399.9px" width="17" height="17" viewBox="0 0 17 17"><rect x="0.300" y="0.300" width="16.200" height="16.200" rx="4.200" fill="#1478f6"/><path d="M5.300 6.700l3.100-3 3.100 3M5.300 10.300l3.100 3 3.100-3" fill="none" stroke="#fff" stroke-width="1.500" stroke-linecap="round" stroke-linejoin="round"/></svg>
<span class="t" style="left:1271.3px;top:401px;font:normal 400 13.6px/16px 'Liberation Sans',sans-serif;color:#161616;letter-spacing:-0.24px;">Nein</span>
<span class="t" style="left:1236.9px;top:423px;font:normal 400 13.6px/16px 'Liberation Sans',sans-serif;color:#161616;letter-spacing:-0.30px;">Text:</span>
<div class="a" style="left:1267.7px;top:422.2px;width:164.5px;height:19px;background:#fff;box-sizing:border-box;border-top:1px solid #dcdcdc;border-bottom:1px solid #b2b2b2"></div>
<span class="t" style="left:1269.3px;top:424px;font:normal 400 13.6px/16px 'Liberation Sans',sans-serif;color:#161616;letter-spacing:-0.55px;"><span style="position:relative;top:3.4px;font-size:1.32em;margin:0 -0.8px;line-height:0">*</span>VARIIERT<span style="position:relative;top:3.4px;font-size:1.32em;margin:0 -0.8px;line-height:0">*</span></span>
<span class="t" style="left:1215.0px;top:446px;font:normal 400 13.6px/16px 'Liberation Sans',sans-serif;color:#161616;letter-spacing:-0.06px;">Klartext:</span>
<div class="a" style="left:1267.7px;top:445.3px;width:164.5px;height:19.2px;background:#fff;box-sizing:border-box;border-top:1px solid #dcdcdc;border-bottom:1px solid #b2b2b2"></div>
<span class="t" style="left:1269.3px;top:447px;font:normal 400 13.6px/16px 'Liberation Sans',sans-serif;color:#b9b9b9;letter-spacing:-0.55px;"><span style="position:relative;top:3.4px;font-size:1.32em;margin:0 -0.8px;line-height:0">*</span>VARIIERT<span style="position:relative;top:3.4px;font-size:1.32em;margin:0 -0.8px;line-height:0">*</span></span>
<span class="t" style="left:1205.4px;top:470px;font:normal 400 13.6px/16px 'Liberation Sans',sans-serif;color:#161616;letter-spacing:0.08px;">Schriftart:</span>
<div class="a" style="left:1267.7px;top:468.2px;width:164.5px;height:20px;background:#fff;border-radius:5.500px;box-shadow:0 0 0 0.800px #c9ccd3,0 1px 1.500px rgba(0,0,0,0.18)"></div><svg style="left:1414px;top:470.1px" width="17" height="17" viewBox="0 0 17 17"><rect x="0.300" y="0.300" width="16.200" height="16.200" rx="4.200" fill="#1478f6"/><path d="M5.300 6.700l3.100-3 3.100 3M5.300 10.300l3.100 3 3.100-3" fill="none" stroke="#fff" stroke-width="1.500" stroke-linecap="round" stroke-linejoin="round"/></svg>
<span class="t" style="left:1271.3px;top:470px;font:normal 400 13.6px/16px 'Liberation Sans',sans-serif;color:#161616;letter-spacing:-0.31px;">Times New Roman</span>
<span class="t" style="left:1207.1px;top:493px;font:normal 400 13.6px/16px 'Liberation Sans',sans-serif;color:#161616;letter-spacing:-0.21px;">Texthöhe:</span>
<div class="a" style="left:1267.7px;top:492px;width:164.5px;height:19.2px;background:#fff;box-sizing:border-box;border-top:1px solid #dcdcdc;border-bottom:1px solid #b2b2b2"></div>
<span class="t" style="left:1269.3px;top:494px;font:normal 400 13.6px/16px 'Liberation Sans',sans-serif;color:#161616;letter-spacing:-0.81px;">12</span>
<span class="t" style="left:1203.1px;top:516px;font:normal 400 13.6px/16px 'Liberation Sans',sans-serif;color:#161616;letter-spacing:-0.14px;">Textbreite:</span>
<div class="a" style="left:1267.7px;top:515.2px;width:164.5px;height:19.2px;background:#fff;box-sizing:border-box;border-top:1px solid #dcdcdc;border-bottom:1px solid #b2b2b2"></div>
<span class="t" style="left:1269.3px;top:517px;font:normal 400 13.6px/16px 'Liberation Sans',sans-serif;color:#161616;">0</span>
<span class="t" style="left:1200.1px;top:539px;font:normal 400 13.6px/16px 'Liberation Sans',sans-serif;color:#161616;letter-spacing:-0.22px;">Textwinkel:</span>
<div class="a" style="left:1267.7px;top:537.6px;width:164.5px;height:19.8px;background:#fff;box-sizing:border-box;border-top:1px solid #dcdcdc;border-bottom:1px solid #b2b2b2"></div>
<span class="t" style="left:1269.3px;top:539px;font:normal 400 13.6px/16px 'Liberation Sans',sans-serif;color:#161616;">0</span>
<span class="t" style="left:1186.4px;top:562px;font:normal 400 13.6px/16px 'Liberation Sans',sans-serif;color:#161616;letter-spacing:-0.24px;">X Skalierung:</span>
<div class="a" style="left:1267.7px;top:560.8px;width:164.5px;height:19.4px;background:#fff;box-sizing:border-box;border-top:1px solid #dcdcdc;border-bottom:1px solid #b2b2b2"></div>
<span class="t" style="left:1269.3px;top:563px;font:normal 400 13.6px/16px 'Liberation Sans',sans-serif;color:#161616;">1</span>
<span class="t" style="left:1238.2px;top:586px;font:normal 400 13.6px/16px 'Liberation Sans',sans-serif;color:#161616;letter-spacing:-0.26px;">Fett:</span>
<div class="a" style="left:1267.7px;top:584px;width:164.5px;height:20.1px;background:#fff;border-radius:5.500px;box-shadow:0 0 0 0.800px #c9ccd3,0 1px 1.500px rgba(0,0,0,0.18)"></div><svg style="left:1414px;top:585.95px" width="17" height="17" viewBox="0 0 17 17"><rect x="0.300" y="0.300" width="16.200" height="16.200" rx="4.200" fill="#1478f6"/><path d="M5.300 6.700l3.100-3 3.100 3M5.300 10.300l3.100 3 3.100-3" fill="none" stroke="#fff" stroke-width="1.500" stroke-linecap="round" stroke-linejoin="round"/></svg>
<span class="t" style="left:1271.3px;top:586px;font:normal 400 13.6px/16px 'Liberation Sans',sans-serif;color:#161616;letter-spacing:-0.24px;">Nein</span>
<span class="t" style="left:1224.4px;top:610px;font:normal 400 13.6px/16px 'Liberation Sans',sans-serif;color:#161616;letter-spacing:-0.26px;">Kursiv:</span>
<div class="a" style="left:1267.7px;top:608px;width:164.5px;height:20.1px;background:#fff;border-radius:5.500px;box-shadow:0 0 0 0.800px #c9ccd3,0 1px 1.500px rgba(0,0,0,0.18)"></div><svg style="left:1414px;top:609.95px" width="17" height="17" viewBox="0 0 17 17"><rect x="0.300" y="0.300" width="16.200" height="16.200" rx="4.200" fill="#1478f6"/><path d="M5.300 6.700l3.100-3 3.100 3M5.300 10.300l3.100 3 3.100-3" fill="none" stroke="#fff" stroke-width="1.500" stroke-linecap="round" stroke-linejoin="round"/></svg>
<span class="t" style="left:1271.3px;top:610px;font:normal 400 13.6px/16px 'Liberation Sans',sans-serif;color:#161616;letter-spacing:-0.24px;">Nein</span>
<span class="t" style="left:1177.9px;top:633px;font:normal 400 13.6px/16px 'Liberation Sans',sans-serif;color:#161616;letter-spacing:-0.15px;">Linienabstand:</span>
<div class="a" style="left:1267.7px;top:632px;width:164.5px;height:19.6px;background:#fff;box-sizing:border-box;border-top:1px solid #dcdcdc;border-bottom:1px solid #b2b2b2"></div>
<span class="t" style="left:1269.3px;top:634px;font:normal 400 13.6px/16px 'Liberation Sans',sans-serif;color:#161616;">1</span>
<span class="t" style="left:1252.2px;top:674px;font:normal 400 13.6px/16px 'Liberation Sans',sans-serif;color:#161616;letter-spacing:-0.67px;">X:</span>
<div class="a" style="left:1267.7px;top:672.9px;width:164.5px;height:19.4px;background:#fff;box-sizing:border-box;border-top:1px solid #dcdcdc;border-bottom:1px solid #b2b2b2"></div>
<span class="t" style="left:1269.3px;top:675px;font:normal 400 13.6px/16px 'Liberation Sans',sans-serif;color:#161616;letter-spacing:-0.55px;"><span style="position:relative;top:3.4px;font-size:1.32em;margin:0 -0.8px;line-height:0">*</span>VARIIERT<span style="position:relative;top:3.4px;font-size:1.32em;margin:0 -0.8px;line-height:0">*</span></span>
<span class="t" style="left:1252.6px;top:697px;font:normal 400 13.6px/16px 'Liberation Sans',sans-serif;color:#161616;letter-spacing:-0.30px;">Y:</span>
<div class="a" style="left:1267.7px;top:695.7px;width:164.5px;height:19.8px;background:#fff;box-sizing:border-box;border-top:1px solid #dcdcdc;border-bottom:1px solid #b2b2b2"></div>
<span class="t" style="left:1269.3px;top:698px;font:normal 400 13.6px/16px 'Liberation Sans',sans-serif;color:#161616;letter-spacing:-0.55px;"><span style="position:relative;top:3.4px;font-size:1.32em;margin:0 -0.8px;line-height:0">*</span>VARIIERT<span style="position:relative;top:3.4px;font-size:1.32em;margin:0 -0.8px;line-height:0">*</span></span>
<span class="t" style="left:1200.6px;top:740px;font:normal 400 13.6px/16px 'Liberation Sans',sans-serif;color:#161616;letter-spacing:-0.12px;">Horizontal:</span>
<div class="a" style="left:1267.7px;top:736.8px;width:164.5px;height:20.5px;background:#fff;border-radius:5.500px;box-shadow:0 0 0 0.800px #c9ccd3,0 1px 1.500px rgba(0,0,0,0.18)"></div><svg style="left:1414px;top:738.95px" width="17" height="17" viewBox="0 0 17 17"><rect x="0.300" y="0.300" width="16.200" height="16.200" rx="4.200" fill="#1478f6"/><path d="M5.300 6.700l3.100-3 3.100 3M5.300 10.300l3.100 3 3.100-3" fill="none" stroke="#fff" stroke-width="1.500" stroke-linecap="round" stroke-linejoin="round"/></svg>
<span class="t" style="left:1271.3px;top:740px;font:normal 400 13.6px/16px 'Liberation Sans',sans-serif;color:#161616;letter-spacing:-0.06px;">Zentrum</span>
<span class="t" style="left:1217.2px;top:763px;font:normal 400 13.6px/16px 'Liberation Sans',sans-serif;color:#161616;letter-spacing:-0.14px;">Vertikal:</span>
<div class="a" style="left:1267.7px;top:761.1px;width:164.5px;height:20.3px;background:#fff;border-radius:5.500px;box-shadow:0 0 0 0.800px #c9ccd3,0 1px 1.500px rgba(0,0,0,0.18)"></div><svg style="left:1414px;top:763.15px" width="17" height="17" viewBox="0 0 17 17"><rect x="0.300" y="0.300" width="16.200" height="16.200" rx="4.200" fill="#1478f6"/><path d="M5.300 6.700l3.100-3 3.100 3M5.300 10.300l3.100 3 3.100-3" fill="none" stroke="#fff" stroke-width="1.500" stroke-linecap="round" stroke-linejoin="round"/></svg>
<span class="t" style="left:1271.3px;top:763px;font:normal 400 13.6px/16px 'Liberation Sans',sans-serif;color:#161616;letter-spacing:0.07px;">Mitte</span>
<span class="t" style="left:1177.5px;top:654px;font:normal 700 13.6px/16px 'Liberation Sans',sans-serif;color:#111;letter-spacing:-0.26px;">Text Position</span>
<span class="t" style="left:1177.5px;top:719px;font:normal 700 13.6px/16px 'Liberation Sans',sans-serif;color:#111;letter-spacing:-0.22px;">Ausrichtung</span>
<!-- p55_rtoolbar.py -->
<div class="a" style="left:1455px;top:108px;width:45px;height:690px;background:linear-gradient(90deg,#ececec,#e3e3e3 25%,#c0c0c0 88%,#c4c4c4)"></div>
<div class="a" style="left:1451.500px;top:131px;width:4px;height:667px;background:#f1f1f1"></div>
<div class="a" style="left:1456px;top:120.4px;width:44px;height:42.800px;background:#b7b7b7;border-radius:6px 0 0 6px"></div>
<div class="a" style="left:1456px;top:269.3px;width:44px;height:42.800px;background:#b7b7b7;border-radius:6px 0 0 6px"></div>
<div class="a" style="left:1456px;top:418.3px;width:44px;height:42.800px;background:#b7b7b7;border-radius:6px 0 0 6px"></div>
<svg style="left:1455px;top:108px" width="45" height="400" viewBox="1455 108 45 400">
<rect x="1462.5" y="116" width="1.500" height="1.500" fill="#9a9a9a"/>
<rect x="1468.55" y="116" width="1.500" height="1.500" fill="#9a9a9a"/>
<rect x="1474.6" y="116" width="1.500" height="1.500" fill="#9a9a9a"/>
<rect x="1480.65" y="116" width="1.500" height="1.500" fill="#9a9a9a"/>
<rect x="1486.7" y="116" width="1.500" height="1.500" fill="#9a9a9a"/>
<path d="M1458 261.5H1499" stroke="#666" stroke-width="1" stroke-dasharray="1 2"/>
<path d="M1458 411H1499" stroke="#666" stroke-width="1" stroke-dasharray="1 2"/>
<rect x="1463.400" y="127.4" width="27.200" height="26.600" fill="#fff" stroke="#7c7c7c" stroke-width="0.900"/><rect x="1463" y="127" width="28" height="4.300" fill="#000"/><rect x="1463.800" y="127.5" width="3" height="3" fill="#fff" stroke="#555" stroke-width="0.500"/>
<rect x="1463.400" y="174.6" width="27.200" height="26.600" fill="#fff" stroke="#7c7c7c" stroke-width="0.900"/><rect x="1463" y="174.2" width="28" height="4.300" fill="#000"/><rect x="1463.800" y="174.7" width="3" height="3" fill="#fff" stroke="#555" stroke-width="0.500"/>
<rect x="1463.400" y="220.4" width="27.200" height="26.600" fill="#fff" stroke="#7c7c7c" stroke-width="0.900"/><rect x="1463" y="220" width="28" height="4.300" fill="#000"/><rect x="1463.800" y="220.5" width="3" height="3" fill="#fff" stroke="#555" stroke-width="0.500"/>
<rect x="1463.400" y="276.7" width="27.200" height="26.600" fill="#fff" stroke="#7c7c7c" stroke-width="0.900"/><rect x="1463" y="276.3" width="28" height="4.300" fill="#000"/><rect x="1463.800" y="276.8" width="3" height="3" fill="#fff" stroke="#555" stroke-width="0.500"/>
<rect x="1463.400" y="323.4" width="27.200" height="26.600" fill="#fff" stroke="#7c7c7c" stroke-width="0.900"/><rect x="1463" y="323" width="28" height="4.300" fill="#000"/><rect x="1463.800" y="323.5" width="3" height="3" fill="#fff" stroke="#555" stroke-width="0.500"/>
<rect x="1463.400" y="369.6" width="27.200" height="26.600" fill="#fff" stroke="#7c7c7c" stroke-width="0.900"/><rect x="1463" y="369.2" width="28" height="4.300" fill="#000"/><rect x="1463.800" y="369.7" width="3" height="3" fill="#fff" stroke="#555" stroke-width="0.500"/>
<rect x="1463.400" y="425.6" width="27.200" height="26.600" fill="#fff" stroke="#7c7c7c" stroke-width="0.900"/><rect x="1463" y="425.2" width="28" height="4.300" fill="#000"/><rect x="1463.800" y="425.7" width="3" height="3" fill="#fff" stroke="#555" stroke-width="0.500"/>
<rect x="1463.400" y="472.7" width="27.200" height="26.600" fill="#fff" stroke="#7c7c7c" stroke-width="0.900"/><rect x="1463" y="472.3" width="28" height="4.300" fill="#000"/><rect x="1463.800" y="472.8" width="3" height="3" fill="#fff" stroke="#555" stroke-width="0.500"/>
<path d="M1469.5 139.5l8.500-4.200v9.500l-8.500 4.200z" fill="#9a9a9a" stroke="#555" stroke-width="0.700" stroke-linejoin="round"/><path d="M1471.5 139.5l8.500-4.200v9.500l-8.500 4.200z" fill="#b8b8b8" stroke="#555" stroke-width="0.700" stroke-linejoin="round"/><path d="M1473.5 139.5l8.500-4.200v9.500l-8.500 4.200z" fill="#f6f6f6" stroke="#555" stroke-width="0.700" stroke-linejoin="round"/>
<path d="M1475.500 146.5l4.500-7v4.500M1477 142.5l3.500-1" fill="none" stroke="#f44" stroke-width="1"/>
<rect x="1470.500" y="184.7" width="10" height="8" fill="#fbeeb8" stroke="#555" stroke-width="0.800"/><circle cx="1479.500" cy="191.7" r="4.500" fill="#fbe9a6" fill-opacity="0.800" stroke="#555" stroke-width="0.800"/>
<rect x="1469" y="231" width="16" height="10" rx="2" fill="#fbfbf6" stroke="#c4d2ea" stroke-width="1.100"/>
<rect x="1466.500" y="284.8" width="4" height="3.200" fill="#000"/><rect x="1473.500" y="284.8" width="14" height="3.200" fill="#fff" stroke="#444" stroke-width="0.600"/>
<rect x="1466.500" y="290.6" width="4" height="3.200" fill="#000"/><rect x="1473.500" y="290.6" width="14" height="3.200" fill="#fff" stroke="#444" stroke-width="0.600"/>
<rect x="1466.500" y="296.4" width="4" height="3.200" fill="#000"/><rect x="1473.500" y="296.4" width="14" height="3.200" fill="#fff" stroke="#444" stroke-width="0.600"/>
<path d="M1470 332.5h14l-5.500 7v6.500l-3-1.200v-5.300z" fill="#8d8d8d" stroke="#555" stroke-width="0.700"/><ellipse cx="1477" cy="332.5" rx="7" ry="1.300" fill="#bbb" stroke="#555" stroke-width="0.500"/>
<path d="M1469.500 378.7v13l5-3.500v-6z" fill="#fff" stroke="#444" stroke-width="0.800"/><rect x="1474.500" y="382.2" width="10.500" height="6" rx="1.500" fill="#9a9a9a" stroke="#777" stroke-width="0.500"/><path d="M1466.500 385.2h21" stroke="#f66" stroke-width="0.700" stroke-dasharray="2 1"/>
<path d="M1466 434.2h10" stroke="#888" stroke-width="1" stroke-dasharray="2.500 0.700"/>
<path d="M1466 437.5h9" stroke="#888" stroke-width="1" stroke-dasharray="2.500 0.700"/>
<path d="M1466 440.8h12" stroke="#888" stroke-width="1" stroke-dasharray="2.500 0.700"/>
<path d="M1466 444.1h11" stroke="#888" stroke-width="1" stroke-dasharray="2.500 0.700"/>
<path d="M1463.500 447.7h27" stroke="#555" stroke-width="0.700"/><path d="M1472 450.2h15" stroke="#777" stroke-width="1.300" stroke-dasharray="3 0.500"/><path d="M1465 450.2h2" stroke="#555" stroke-width="1"/>
<rect x="1470" y="480.8" width="14" height="15" rx="1.200" fill="#c08a3e" stroke="#8a5a1c" stroke-width="0.600"/><rect x="1471.800" y="483.1" width="10.400" height="11.500" fill="#f4f4f4"/><rect x="1474" y="479.8" width="6" height="3" rx="1" fill="#8a8a8a"/><path d="M1473.500 487.3h6M1473.500 489.8h7M1473.500 492.3h5" stroke="#ccc" stroke-width="0.800"/>
</svg>
<!-- p60_menu.py -->
<div class="a" style="left:566px;top:30px;width:329px;height:523px;background:#ececec;border-radius:5px;box-shadow:0 3px 8px rgba(0,0,0,0.130),0 0 0 0.500px rgba(0,0,0,0.120)"></div>
<div class="a" style="left:566px;top:119.5px;width:329px;height:1px;background:#d2d2d2"></div>
<div class="a" style="left:566px;top:211.5px;width:329px;height:1px;background:#d2d2d2"></div>
<div class="a" style="left:566px;top:263.5px;width:329px;height:1px;background:#d2d2d2"></div>
<div class="a" style="left:566px;top:315.5px;width:329px;height:1px;background:#d2d2d2"></div>
<div class="a" style="left:566px;top:367.5px;width:329px;height:1px;background:#d2d2d2"></div>
<div class="a" style="left:566px;top:399.5px;width:329px;height:1px;background:#d2d2d2"></div>
<div class="a" style="left:566px;top:471.5px;width:329px;height:1px;background:#d2d2d2"></div>
<div class="a" style="left:566px;top:523.5px;width:329px;height:1px;background:#d2d2d2"></div>
<svg style="left:566px;top:25px" width="329" height="528" viewBox="566 25 329 528">
<path d="M586.5 43.2C590.1 37 598.1 37 601.7 43.2C598.1 49.2 590.1 49.2 586.5 43.2z" fill="#9a9a9a"/><ellipse cx="594.1" cy="43.5" rx="4.400" ry="2.700" fill="#e4e4e4"/><circle cx="594.1" cy="43.4" r="2.600" fill="#9a9a9a"/><circle cx="593.2" cy="42.5" r="0.900" fill="#e4e4e4" opacity="0.700"/>
<clipPath id="ceh"><path d="M595.1 35.2L603.1 35.2L603.1 51.2L589.1 51.2z"/></clipPath><g clip-path="url(#ceh)"><path d="M586.5 43.2C590.1 37 598.1 37 601.7 43.2C598.1 49.2 590.1 49.2 586.5 43.2z" fill="#000"/><ellipse cx="594.1" cy="43.5" rx="4.400" ry="2.700" fill="#fff"/><circle cx="594.1" cy="43.4" r="2.600" fill="#000"/><circle cx="593.2" cy="42.5" r="0.900" fill="#fff" opacity="0.700"/></g>
<g stroke="#e8b820" stroke-width="1"><path d="M598.7 64.2L601.4 64.2"/><path d="M597.353 67.4527L599.262 69.3619"/><path d="M594.1 68.8L594.1 71.5"/><path d="M590.847 67.4527L588.938 69.3619"/><path d="M589.5 64.2L586.8 64.2"/><path d="M590.847 60.9473L588.938 59.0381"/><path d="M594.1 59.6L594.1 56.9"/><path d="M597.353 60.9473L599.262 59.0381"/></g>
<circle cx="594.1" cy="64.2" r="3.600" fill="#f7b71c"/>
<path d="M588.6 60.2l3 2.500 3-4.500 0.500 4.500-4 4.500-4.500-1.500 3-2z" fill="#48c4f4"/>
<path d="M591.1 82.7v-3a3 3 0 0 1 6 0v3" fill="none" stroke="#d0d0d0" stroke-width="1.700"/>
<rect x="589.1" y="82.2" width="10" height="8" fill="#fff"/><path d="M589.1 90.2v-4.500l10-3.500v8z" fill="#000"/>
<path d="M586.5 101.2C590.1 95 598.1 95 601.7 101.2C598.1 107.2 590.1 107.2 586.5 101.2z" fill="#000"/><ellipse cx="594.1" cy="101.5" rx="4.400" ry="2.700" fill="#fff"/><circle cx="594.1" cy="101.4" r="2.600" fill="#000"/><circle cx="593.2" cy="100.5" r="0.900" fill="#fff" opacity="0.700"/>
<rect x="592.1" y="107.7" width="9" height="3.500" fill="#fff"/><path d="M592.1 107.7h9" stroke="#1010e0" stroke-width="1.400"/>
<path d="M586.5 135.2C590.1 129 598.1 129 601.7 135.2C598.1 141.2 590.1 141.2 586.5 135.2z" fill="#000"/><ellipse cx="594.1" cy="135.5" rx="4.400" ry="2.700" fill="#fff"/><circle cx="594.1" cy="135.4" r="2.600" fill="#000"/><circle cx="593.2" cy="134.5" r="0.900" fill="#fff" opacity="0.700"/>
<path d="M586.5 155.2C590.1 149 598.1 149 601.7 155.2C598.1 161.2 590.1 161.2 586.5 155.2z" fill="#a2a2a2"/><ellipse cx="594.1" cy="155.5" rx="4.400" ry="2.700" fill="#e4e4e4"/><circle cx="594.1" cy="155.4" r="2.600" fill="#a2a2a2"/><circle cx="593.2" cy="154.5" r="0.900" fill="#e4e4e4" opacity="0.700"/>
<path d="M586.5 175.2C590.1 169 598.1 169 601.7 175.2C598.1 181.2 590.1 181.2 586.5 175.2z" fill="#000"/><ellipse cx="594.1" cy="175.5" rx="4.400" ry="2.700" fill="#fff"/><circle cx="594.1" cy="175.4" r="2.600" fill="#000"/><circle cx="593.2" cy="174.5" r="0.900" fill="#fff" opacity="0.700"/>
<g stroke="#5ecbf5" stroke-width="1.900" stroke-linecap="round"><path d="M594.1 190.1L594.1 201.3"/><path d="M589.25 192.9L598.95 198.5"/><path d="M589.25 198.5L598.95 192.9"/></g>
<path d="M591.1 226.7v-3a3 3 0 0 1 6 0v3" fill="none" stroke="#000" stroke-width="1.700"/><rect x="589.1" y="226.2" width="10" height="8" rx="0.800" fill="#000"/>
<path d="M591.1 246.7v-3a3 3 0 0 1 6 0v3" fill="none" stroke="#b5b5b5" stroke-width="1.700"/><rect x="589.1" y="246.2" width="10" height="8" rx="0.800" fill="#a0a0a0"/>
<path d="M588.5 279.5h11.2M594.1 273.9v11.2" stroke="#e60012" stroke-width="3.4"/>
<path d="M588.5 294.5v4.700h3.200" stroke="#666" stroke-width="0.900" fill="none"/>
<path d="M592.3 302.5h8.4M596.5 298.3v8.4" stroke="#e60012" stroke-width="2.8"/>
<path d="M587.2 329.8l7.6 -3.8v5.7l-7.6 3.8z" fill="#fff" stroke="#8a8a8a" stroke-width="0.800" stroke-linejoin="round"/><path d="M589.4 335.4l3 -7.4v4.6M590.8 332.7l2 -1.2" fill="none" stroke="#ff5050" stroke-width="1.100"/>
<path d="M592.4 335.5h8.6M596.7 331.2v8.6" stroke="#e60012" stroke-width="2.6"/>
<path d="M586.3 350.7l9.4 -5.2v8.1l-9.4 5.2z" fill="#fff" stroke="#3a3a3a" stroke-width="0.800" stroke-linejoin="round"/><path d="M588.5 356.3l4.8 -7.4v4.6M589.9 353.6l3.8 -1.2" fill="none" stroke="#3030ff" stroke-width="1.100"/>
<path d="M592.4 352.1l9.5 -4.9v8.1l-9.5 4.9z" fill="#fff" stroke="#3a3a3a" stroke-width="0.800" stroke-linejoin="round"/><path d="M594.6 357.7l4.9 -7.4v4.6M596 355l3.9 -1.2" fill="none" stroke="#ff3030" stroke-width="1.100"/>
<path d="M590.6 353.7h6" stroke="#3030ff" stroke-width="1.200"/>
<path d="M587.5 382.9l9.6 -5v8.1l-9.6 5z" fill="#fff" stroke="#3a3a3a" stroke-width="0.800" stroke-linejoin="round"/><path d="M591 383.4l9.6 -5v8.1l-9.6 5z" fill="#fff" stroke="#3a3a3a" stroke-width="0.800" stroke-linejoin="round"/><path d="M593.2 389l5 -7.4v4.6M594.6 386.3l4 -1.2" fill="none" stroke="#ff3030" stroke-width="1.100"/>
<path d="M589.5 385.7v2.500" stroke="#2a2aff" stroke-width="1.300"/>
<path d="M588.4 415.7h11.500" stroke="#e60012" stroke-width="3.200"/>
<path d="M593.1 427.7l3.500 5" stroke="#8a5a20" stroke-width="1.600"/><path d="M587.6 434.7l6-3.500 3.500 4.500-7.500 2.500z" fill="#f2c21a"/><path d="M593.1 436.2l6.500 3.500-2 3-6.500-3.500z" fill="#fff" stroke="#5577bb" stroke-width="0.900"/>
<g transform="translate(588.6 461.7) rotate(-42)"><path d="M0 -1.900l-3.600 1.900 3.600 1.900z" fill="#e8c48c"/><path d="M-3.600 0l1.400-0.800v1.600z" fill="#333"/><rect x="0" y="-1.900" width="13.500" height="3.800" fill="#e98b2a" stroke="#a85a10" stroke-width="0.600"/><rect x="13.500" y="-1.900" width="2.600" height="3.800" fill="#d05050"/></g>
<path d="M587.5 486.9l9.6 -5v8.1l-9.6 5z" fill="#fff" stroke="#3a3a3a" stroke-width="0.800" stroke-linejoin="round"/><path d="M591 487.4l9.6 -5v8.1l-9.6 5z" fill="#fff" stroke="#3a3a3a" stroke-width="0.800" stroke-linejoin="round"/><path d="M593.2 493l5 -7.4v4.6M594.6 490.3l4 -1.2" fill="none" stroke="#ff3030" stroke-width="1.100"/>
<path d="M587.5 506.9l9.6 -5v8.1l-9.6 5z" fill="#fff" stroke="#3a3a3a" stroke-width="0.800" stroke-linejoin="round"/><path d="M591 507.4l9.6 -5v8.1l-9.6 5z" fill="#fff" stroke="#3a3a3a" stroke-width="0.800" stroke-linejoin="round"/><path d="M593.2 513l5 -7.4v4.6M594.6 510.3l4 -1.2" fill="none" stroke="#9a9a9a" stroke-width="1.100"/>
<path d="M875 533.500l8 4.800-8 4.800z" fill="#222"/>
</svg>
<span class="t" style="left:606.2px;top:35px;font:normal 400 13.6px/16px 'Liberation Sans',sans-serif;color:#1e1e1e;letter-spacing:0.05px;">Sichtbarkeit umschalten (YV)</span>
<span class="t" style="left:606.2px;top:55px;font:normal 400 13.6px/16px 'Liberation Sans',sans-serif;color:#1e1e1e;letter-spacing:-0.05px;">Gefroren umschalten (YF)</span>
<span class="t" style="left:606.2px;top:75px;font:normal 400 13.6px/16px 'Liberation Sans',sans-serif;color:#1e1e1e;letter-spacing:0.01px;">Gesperrt umschalten (YL)</span>
<span class="t" style="left:606.2px;top:95px;font:normal 400 13.6px/16px 'Liberation Sans',sans-serif;color:#1e1e1e;letter-spacing:-0.11px;">Nur aktiven Layer anzeigen (YO)</span>
<span class="t" style="left:606.2px;top:127px;font:normal 400 13.6px/16px 'Liberation Sans',sans-serif;color:#1e1e1e;letter-spacing:-0.14px;">Alle Layer anzeigen (YS)</span>
<span class="t" style="left:606.2px;top:147px;font:normal 400 13.6px/16px 'Liberation Sans',sans-serif;color:#1e1e1e;letter-spacing:-0.09px;">Alle Layer ausblenden (YH)</span>
<span class="t" style="left:606.2px;top:167px;font:normal 400 13.6px/16px 'Liberation Sans',sans-serif;color:#1e1e1e;letter-spacing:-0.07px;">Alle Layer auftauen (YW)</span>
<span class="t" style="left:606.2px;top:187px;font:normal 400 13.6px/16px 'Liberation Sans',sans-serif;color:#1e1e1e;letter-spacing:-0.03px;">Alle Layer einfrieren (YZ)</span>
<span class="t" style="left:606.2px;top:219px;font:normal 400 13.6px/16px 'Liberation Sans',sans-serif;color:#1e1e1e;letter-spacing:-0.10px;">Alle Layer sperren (YK)</span>
<span class="t" style="left:606.2px;top:239px;font:normal 400 13.6px/16px 'Liberation Sans',sans-serif;color:#1e1e1e;letter-spacing:-0.05px;">Alle Layer entsperren (YN)</span>
<span class="t" style="left:606.2px;top:271px;font:normal 400 13.6px/16px 'Liberation Sans',sans-serif;color:#1e1e1e;letter-spacing:-0.01px;">Layer hinzufügen (YA)</span>
<span class="t" style="left:606.2px;top:291px;font:normal 400 13.6px/16px 'Liberation Sans',sans-serif;color:#1e1e1e;letter-spacing:0.01px;">Unterlayer hinzufügen (YU)</span>
<span class="t" style="left:606.2px;top:323px;font:normal 400 13.6px/16px 'Liberation Sans',sans-serif;color:#1e1e1e;letter-spacing:-0.04px;">Layer erstellen von Selektion (YT)</span>
<span class="t" style="left:606.2px;top:343px;font:normal 400 13.6px/16px 'Liberation Sans',sans-serif;color:#1e1e1e;letter-spacing:-0.06px;">Auswahl auf aktuellen Layer verschieben (YJ)</span>
<span class="t" style="left:606.2px;top:375px;font:normal 400 13.6px/16px 'Liberation Sans',sans-serif;color:#1e1e1e;letter-spacing:-0.06px;">Layer duplizieren (YY)</span>
<span class="t" style="left:606.2px;top:407px;font:normal 400 13.6px/16px 'Liberation Sans',sans-serif;color:#1e1e1e;letter-spacing:-0.14px;">Layer löschen (YR)</span>
<span class="t" style="left:606.2px;top:427px;font:normal 400 13.6px/16px 'Liberation Sans',sans-serif;color:#1e1e1e;letter-spacing:-0.01px;">Nicht gebrauchte Layer löschen (YP)</span>
<span class="t" style="left:606.2px;top:447px;font:normal 400 13.6px/16px 'Liberation Sans',sans-serif;color:#1e1e1e;letter-spacing:-0.01px;">Layerattribute ändern (YE)</span>
<span class="t" style="left:606.2px;top:479px;font:normal 400 13.6px/16px 'Liberation Sans',sans-serif;color:#1e1e1e;letter-spacing:-0.03px;">Layerobjekte selektieren (YC)</span>
<span class="t" style="left:606.2px;top:499px;font:normal 400 13.6px/16px 'Liberation Sans',sans-serif;color:#1e1e1e;letter-spacing:-0.01px;">Layerobjekte deselektieren (YD)</span>
<span class="t" style="left:606.2px;top:531px;font:normal 400 13.6px/16px 'Liberation Sans',sans-serif;color:#1e1e1e;letter-spacing:-0.04px;">Layerzustand</span>
<!-- p70_overlay.py -->
<div class="a" style="left:566.2px;top:0px;width:44.8px;height:19.7px;background:rgba(255,40,50,0.170)"></div><div class="a" style="left:557.2px;top:-0.8px;width:62.8px;height:1.500px;background:linear-gradient(90deg,rgba(255,90,98,0),rgba(255,90,98,0.780) 9px,rgba(255,90,98,0.780) 53.8px,rgba(255,90,98,0))"></div><div class="a" style="left:557.2px;top:18.9px;width:62.8px;height:1.500px;background:linear-gradient(90deg,rgba(255,90,98,0),rgba(255,90,98,0.780) 9px,rgba(255,90,98,0.780) 53.8px,rgba(255,90,98,0))"></div><div class="a" style="left:565.4px;top:-9px;width:1.500px;height:37.7px;background:linear-gradient(180deg,rgba(255,90,98,0),rgba(255,90,98,0.780) 9px,rgba(255,90,98,0.780) 28.7px,rgba(255,90,98,0))"></div><div class="a" style="left:610.2px;top:-9px;width:1.500px;height:37.7px;background:linear-gradient(180deg,rgba(255,90,98,0),rgba(255,90,98,0.780) 9px,rgba(255,90,98,0.780) 28.7px,rgba(255,90,98,0))"></div>
<div class="a" style="left:566px;top:270px;width:329px;height:20px;background:rgba(255,40,50,0.170)"></div><div class="a" style="left:557px;top:269.2px;width:347px;height:1.500px;background:linear-gradient(90deg,rgba(255,90,98,0),rgba(255,90,98,0.780) 9px,rgba(255,90,98,0.780) 338px,rgba(255,90,98,0))"></div><div class="a" style="left:557px;top:289.2px;width:347px;height:1.500px;background:linear-gradient(90deg,rgba(255,90,98,0),rgba(255,90,98,0.780) 9px,rgba(255,90,98,0.780) 338px,rgba(255,90,98,0))"></div><div class="a" style="left:565.2px;top:261px;width:1.500px;height:38px;background:linear-gradient(180deg,rgba(255,90,98,0),rgba(255,90,98,0.780) 9px,rgba(255,90,98,0.780) 29px,rgba(255,90,98,0))"></div><div class="a" style="left:894.2px;top:261px;width:1.500px;height:38px;background:linear-gradient(180deg,rgba(255,90,98,0),rgba(255,90,98,0.780) 9px,rgba(255,90,98,0.780) 29px,rgba(255,90,98,0))"></div>
<div class="a" style="left:1310.600px;top:438.800px;width:78.400px;height:78.400px;border-radius:50%;box-sizing:border-box;border:4.200px solid rgba(150,174,200,0.720);background:radial-gradient(circle closest-side,rgba(255,255,255,0) 0,rgba(255,255,255,0) 74%,rgba(255,255,255,0.350) 88%,rgba(255,255,255,0.750) 100%);box-shadow:0 0 1.500px 0.500px rgba(120,145,180,0.450), inset 0 0 2px 0.500px rgba(120,145,180,0.350)"></div>
<svg style="left:1340px;top:470px" width="40" height="44" viewBox="1340 470 40 44"><path d="M1350.400 478v21.900l5.300-5 5.300 10 3.200-1.700-4.800-9.600 5.800-1.400z" fill="#fff" stroke="#000" stroke-width="1.300" stroke-linejoin="miter"/></svg>
</body></html>
